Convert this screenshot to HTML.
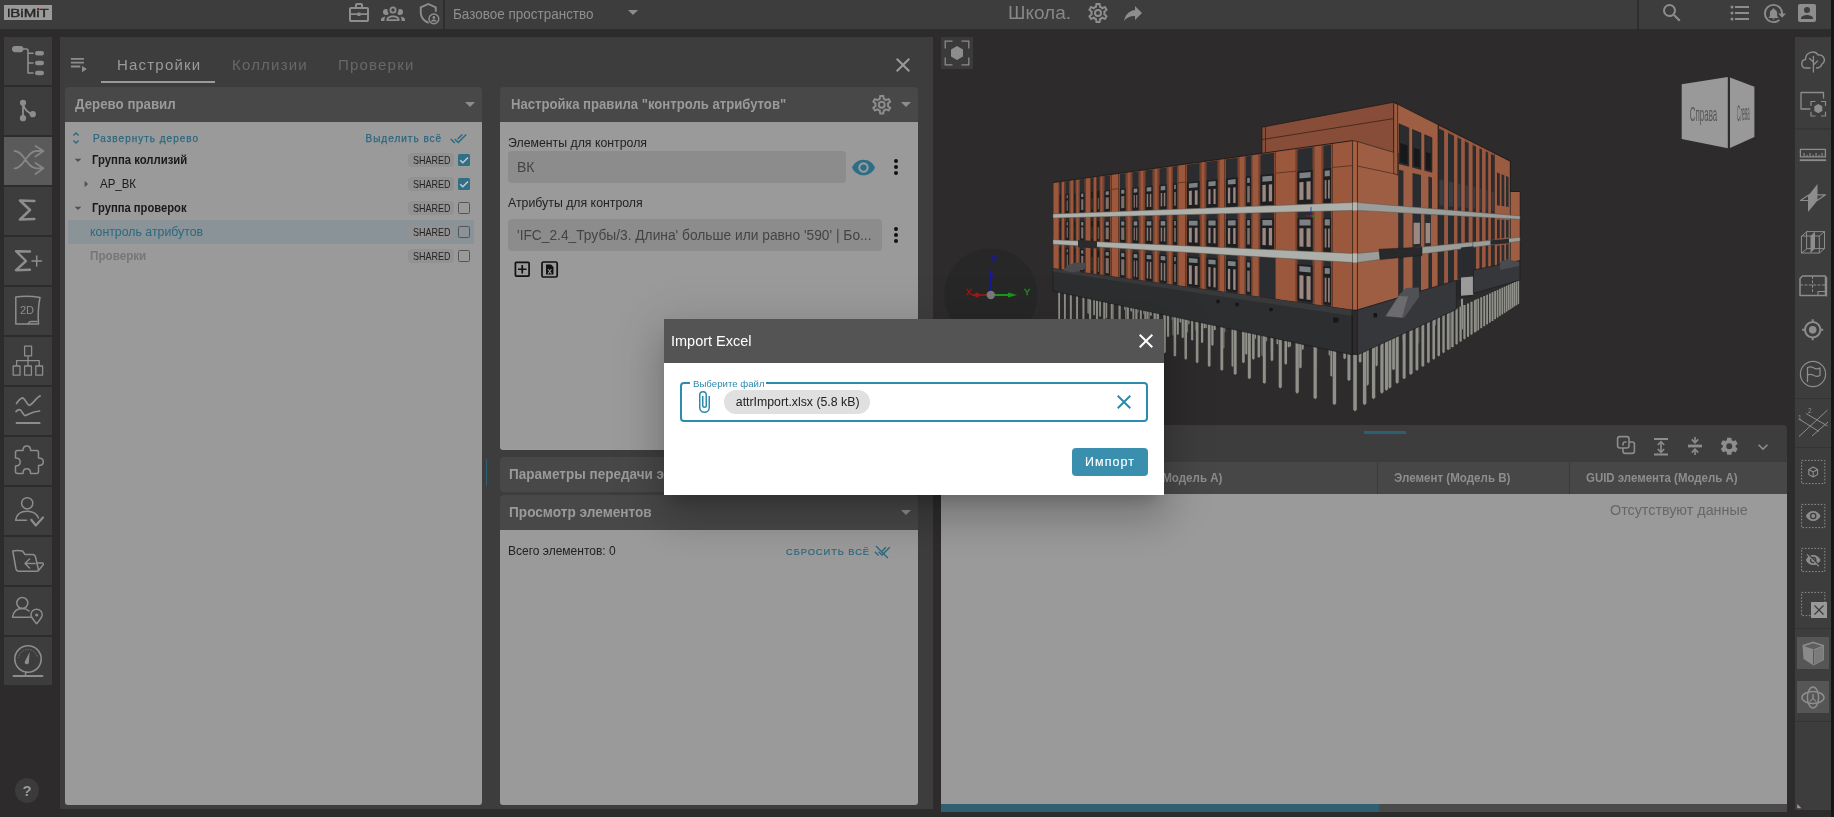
<!DOCTYPE html>
<html lang="ru"><head><meta charset="utf-8"><title>BiMiT</title><style>
*{box-sizing:border-box;margin:0;padding:0}
html,body{width:1834px;height:817px;overflow:hidden;background:#2d2b2c;font-family:"Liberation Sans",sans-serif;}
.a{position:absolute}
.t{position:absolute;white-space:nowrap;line-height:1}
svg{position:absolute;overflow:visible}
.sb{position:absolute;left:4px;width:48px;height:48px;background:#3d3d3d}
.hdr{position:absolute;background:#484848;border-radius:4px 4px 0 0}
.body{position:absolute;background:#9a9a9a;border-radius:0 0 3px 3px}
.pt{position:absolute;white-space:nowrap;line-height:1;font-weight:bold;font-size:14px;color:#9a9a9a}
.chip{position:absolute;left:408.3px;width:45.6px;height:13.6px;border-radius:4px;background:#929292;color:#222;font-size:9.5px;line-height:14px;text-align:center;letter-spacing:0.1px}
.cb{position:absolute;left:458px;width:12px;height:12px}
.cbo{border:1.5px solid #555;border-radius:1.5px}
.tr{position:absolute;white-space:nowrap;line-height:1;font-size:12px;color:#1a1a1a}
.th{position:absolute;white-space:nowrap;line-height:1;font-size:12px;font-weight:bold;color:#8d8d8d}
</style></head><body>
<div id="app" style="position:absolute;left:0;top:0;width:1834px;height:817px;will-change:transform">
<div class="a" style="left:0px;top:0px;width:1831px;height:29px;background:#3d3d3d;"></div>
<div class="a" style="left:1831px;top:0px;width:3px;height:817px;background:#161616;"></div>
<div class="a" style="left:4px;top:5px;width:48px;height:15px;background:#9a9a9a;"></div>
<svg style="left:4px;top:5px" width="48" height="15" viewBox="0 0 48 15"><text x="6.3" y="12.1" font-family="Liberation Sans, sans-serif" font-size="11.6" fill="#262626" stroke="#262626" stroke-width="0.4" textLength="38.5" lengthAdjust="spacingAndGlyphs">BiMiT</text><rect x="33.0" y="3.0" width="2.1" height="2.1" fill="#a81414"/><rect x="4.0" y="3.6" width="1.6" height="8.5" fill="#262626"/></svg>
<svg style="left:347px;top:1px" width="24" height="24" viewBox="0 0 24 24"><path fill="#8d8d8d" d="M20,6C20.58,6 21.05,6.2 21.42,6.59C21.8,7 22,7.45 22,8V19C22,19.55 21.8,20 21.42,20.41C21.05,20.8 20.58,21 20,21H4C3.42,21 2.95,20.8 2.58,20.41C2.2,20 2,19.55 2,19V8C2,7.45 2.2,7 2.58,6.59C2.95,6.2 3.42,6 4,6H8V4C8,3.42 8.2,2.95 8.58,2.58C8.95,2.2 9.42,2 10,2H14C14.58,2 15.05,2.2 15.42,2.58C15.8,2.95 16,3.42 16,4V6H20M4,8V12.2H10.5V11.5H13.5V12.2H20V8H4M4,14V19H20V14H13.5V15H10.5V14H4M14,6V4H10V6H14Z"/></svg>
<svg style="left:381px;top:1px" width="24" height="24" viewBox="0 0 24 24"><path fill="#8d8d8d" d="M12,5.5A3.5,3.5 0 0,1 15.5,9A3.5,3.5 0 0,1 12,12.5A3.5,3.5 0 0,1 8.500,9A3.5,3.5 0 0,1 12,5.5M12,7.3A1.7,1.7 0 0,0 10.3,9A1.7,1.7 0 0,0 12,10.7A1.7,1.7 0 0,0 13.7,9A1.7,1.7 0 0,0 12,7.3M5,8C5.56,8 6.08,8.15 6.53,8.42C6.38,9.85 6.8,11.27 7.66,12.38C7.16,13.34 6.16,14 5,14A3,3 0 0,1 2,11A3,3 0 0,1 5,8M19,8A3,3 0 0,1 22,11A3,3 0 0,1 19,14C17.84,14 16.84,13.34 16.34,12.38C17.2,11.27 17.62,9.85 17.47,8.42C17.92,8.15 18.44,8 19,8M5.500,18.25C5.500,16.18 8.41,14.5 12,14.5C15.59,14.5 18.5,16.18 18.5,18.25V20H5.500V18.25M7.3,18.2H16.7C16.5,17.2 14.6,16.2 12,16.2C9.4,16.2 7.5,17.2 7.3,18.2M0,20V18.500C0,17.11 1.89,15.94 4.45,15.600C3.86,16.28 3.5,17.22 3.5,18.25V20H0M24,20H20.500V18.25C20.500,17.22 20.14,16.28 19.55,15.600C22.11,15.94 24,17.11 24,18.500V20Z"/></svg>
<svg style="left:416.5px;top:2px" width="22.5" height="22.5" viewBox="0 0 24 24"><path fill="#8d8d8d" d="M12,1L3,5V11C3,16.55 6.840,21.74 12,23C12.4,22.9 12.8,22.77 13.18,22.62C12.6,22 12.1,21.3 11.75,20.5C8.100,19.3 5,15.4 5,11.2V6.300L12,3.190L19,6.300V10.2C19.700,10.3 20.38,10.500 21,10.78V5L12,1M18,12A6,6 0 0,0 12,18A6,6 0 0,0 18,24A6,6 0 0,0 24,18A6,6 0 0,0 18,12M18,13.600A4.400,4.400 0 0,1 22.400,18A4.400,4.400 0 0,1 18,22.400A4.400,4.400 0 0,1 13.600,18A4.400,4.400 0 0,1 18,13.600M18,15A1.500,1.500 0 0,0 16.500,16.500A1.500,1.500 0 0,0 18,18A1.500,1.500 0 0,0 19.500,16.500A1.500,1.500 0 0,0 18,15M18,18.700C16.700,18.700 15.200,19.300 15.200,20.200V20.800H20.800V20.200C20.800,19.300 19.300,18.700 18,18.700Z"/></svg>
<div class="a" style="left:443px;top:0px;width:2px;height:29px;background:#2e2e2e;"></div>
<div class="t" style="left:453px;top:7px;font-size:14px;color:#8f8f8f;transform:scaleX(0.963);transform-origin:0 0">Базовое пространство</div>
<svg style="left:621px;top:0.2px" width="24" height="24" viewBox="0 0 24 24"><path fill="#8d8d8d" d="M7,10L12,15L17,10H7Z"/></svg>
<div class="t" style="left:1008px;top:3.0px;font-size:19px;color:#878787">Школа.</div>
<svg style="left:1085.5px;top:1px" width="24" height="24" viewBox="0 0 24 24"><path fill="#8d8d8d" d="M12,8A4,4 0 0,1 16,12A4,4 0 0,1 12,16A4,4 0 0,1 8,12A4,4 0 0,1 12,8M12,10A2,2 0 0,0 10,12A2,2 0 0,0 12,14A2,2 0 0,0 14,12A2,2 0 0,0 12,10M10,22C9.75,22 9.54,21.82 9.5,21.58L9.13,18.93C8.5,18.68 7.96,18.34 7.44,17.94L4.95,18.95C4.73,19.03 4.46,18.95 4.34,18.73L2.34,15.27C2.21,15.05 2.27,14.78 2.46,14.63L4.57,12.97L4.5,12L4.57,11L2.46,9.37C2.27,9.22 2.21,8.95 2.34,8.73L4.34,5.27C4.46,5.05 4.73,4.96 4.95,5.05L7.44,6.05C7.96,5.66 8.5,5.32 9.13,5.07L9.5,2.42C9.54,2.18 9.75,2 10,2H14C14.25,2 14.46,2.18 14.5,2.42L14.87,5.07C15.5,5.32 16.04,5.66 16.56,6.05L19.05,5.05C19.27,4.96 19.54,5.05 19.66,5.27L21.66,8.73C21.79,8.95 21.73,9.22 21.54,9.37L19.43,11L19.5,12L19.43,13L21.54,14.63C21.73,14.78 21.79,15.05 21.66,15.27L19.66,18.73C19.54,18.95 19.27,19.04 19.05,18.95L16.56,17.95C16.04,18.34 15.5,18.68 14.87,18.93L14.5,21.58C14.46,21.82 14.25,22 14,22H10M11.25,4L10.88,6.61C9.68,6.86 8.62,7.5 7.85,8.39L5.44,7.35L4.69,8.65L6.8,10.2C6.4,11.37 6.4,12.64 6.8,13.8L4.68,15.36L5.43,16.66L7.86,15.62C8.63,16.5 9.68,17.14 10.87,17.38L11.24,20H12.76L13.13,17.39C14.32,17.14 15.37,16.5 16.14,15.62L18.57,16.66L19.32,15.36L17.2,13.81C17.6,12.64 17.6,11.37 17.2,10.2L19.31,8.65L18.56,7.35L16.15,8.39C15.38,7.5 14.32,6.86 13.12,6.62L12.75,4H11.25Z"/></svg>
<svg style="left:1121px;top:1px" width="24" height="24" viewBox="0 0 24 24"><path fill="#8d8d8d" d="M21,12L14,5V9C7,10 4,15 3,20C5.5,16.5 9,14.9 14,14.9V19L21,12Z"/></svg>
<div class="a" style="left:1637px;top:0px;width:2px;height:29px;background:#2e2e2e;"></div>
<svg style="left:1659.5px;top:0.5px" width="24" height="24" viewBox="0 0 24 24"><path fill="#8d8d8d" d="M9.5,3A6.5,6.5 0 0,1 16,9.5C16,11.11 15.41,12.59 14.44,13.73L14.71,14H15.5L20.5,19L19,20.5L14,15.5V14.71L13.73,14.44C12.59,15.41 11.11,16 9.5,16A6.5,6.5 0 0,1 3,9.5A6.5,6.5 0 0,1 9.5,3M9.5,5C7,5 5,7 5,9.5C5,12 7,14 9.5,14C12,14 14,12 14,9.5C14,7 12,5 9.5,5Z"/></svg>
<svg style="left:1727.5px;top:0.5px" width="24" height="24" viewBox="0 0 24 24"><path fill="#8d8d8d" d="M7,5H21V7H7V5M7,13V11H21V13H7M4,4.5A1.5,1.5 0 0,1 5.5,6A1.5,1.5 0 0,1 4,7.5A1.5,1.5 0 0,1 2.5,6A1.5,1.5 0 0,1 4,4.5M4,10.5A1.5,1.5 0 0,1 5.5,12A1.5,1.5 0 0,1 4,13.5A1.5,1.5 0 0,1 2.5,12A1.5,1.5 0 0,1 4,10.5M7,19V17H21V19H7M4,16.5A1.5,1.5 0 0,1 5.5,18A1.5,1.5 0 0,1 4,19.5A1.5,1.5 0 0,1 2.5,18A1.5,1.5 0 0,1 4,16.5Z"/></svg>
<svg style="left:1761.5px;top:1.5px" width="23" height="23" viewBox="0 0 24 24"><path fill="#8d8d8d" d="M12,2A10,10 0 0,0 2,12A10,10 0 0,0 12,22C14.6,22 17,21 18.800,19.300L17.400,17.900C16,19.200 14.100,20 12,20A8,8 0 0,1 4,12A8,8 0 0,1 12,4A8,8 0 0,1 20,12H17L21,16.500L25,12H22A10,10 0 0,0 12,2M12,6.500C11.400,6.500 11,6.900 11,7.500V7.800C9.300,8.300 8.200,9.800 8.200,11.600V14.800L7,16V16.600H17V16L15.800,14.800V11.600C15.800,9.800 14.700,8.300 13,7.800V7.500C13,6.900 12.600,6.500 12,6.500M10.800,17.300A1.200,1.200 0 0,0 12,18.500A1.200,1.200 0 0,0 13.200,17.300H10.800Z"/></svg>
<svg style="left:1795px;top:1px" width="24" height="24" viewBox="0 0 24 24"><path fill="#8d8d8d" d="M6,17C6,15 10,13.9 12,13.9C14,13.9 18,15 18,17V18H6M15,9A3,3 0 0,1 12,12A3,3 0 0,1 9,9A3,3 0 0,1 12,6A3,3 0 0,1 15,9M3,5V19A2,2 0 0,0 5,21H19A2,2 0 0,0 21,19V5A2,2 0 0,0 19,3H5C3.89,3 3,3.9 3,5Z"/></svg>
<div class="sb" style="top:37px;background:#3d3d3d"></div>
<svg style="left:4px;top:37px" width="48" height="48" viewBox="0 0 48 48"><rect x="8" y="9" width="11.5" height="6.2" rx="3.1" fill="#8d8d8d"/><path d="M18.0,12.0 L22.5,12.0 Q24.0,12.0 24.0,13.5 L24.0,36.0 L29.0,36.0 M24.0,16.2 L29.0,16.2 M24.0,26.0 L29.0,26.0" fill="none" stroke="#8d8d8d" stroke-width="1.6" stroke-linecap="round" stroke-linejoin="round" /><rect x="31" y="13.900000000000006" width="9" height="4.6" rx="2.3" fill="#8d8d8d"/><rect x="31" y="23.700000000000003" width="9" height="4.6" rx="2.3" fill="#8d8d8d"/><rect x="31" y="33.7" width="9" height="4.6" rx="2.3" fill="#8d8d8d"/></svg>
<div class="sb" style="top:87px;background:#3d3d3d"></div>
<svg style="left:4px;top:87px" width="48" height="48" viewBox="0 0 48 48"><circle cx="19" cy="15.799999999999997" r="3.1" fill="#8d8d8d"/><circle cx="19" cy="31.200000000000003" r="3.1" fill="#8d8d8d"/><circle cx="28.799999999999997" cy="27.200000000000003" r="3.1" fill="#8d8d8d"/><path d="M19.0,15.8 L19.0,31.2 M19.0,17.0 Q21.0,25.0 28.8,27.2" fill="none" stroke="#8d8d8d" stroke-width="1.8" stroke-linecap="round" stroke-linejoin="round" /></svg>
<div class="sb" style="top:137px;background:#5a5a5a"></div>
<svg style="left:4px;top:137px" width="48" height="48" viewBox="0 0 48 48"><path d="M10.5,14.0 C20.0,14.0 23.0,31.3 32.0,31.3 L39.0,31.3 M10.5,31.3 C20.0,31.3 23.0,14.0 32.0,14.0 L39.0,14.0 M31.5,9.0 L39.5,14.0 L31.5,19.5 M31.5,26.0 L39.5,31.3 L31.5,37.0" fill="none" stroke="#858585" stroke-width="1.8" stroke-linecap="round" stroke-linejoin="round"/></svg>
<div class="sb" style="top:187px;background:#3d3d3d"></div>
<svg style="left:4px;top:187px" width="48" height="48" viewBox="0 0 48 48"><path d="M30.3,14.0 L16.0,13.5 L26.0,23.0 L16.0,32.5 L30.3,32.0" fill="none" stroke="#8d8d8d" stroke-width="2.6" stroke-linecap="round" stroke-linejoin="round" /></svg>
<div class="sb" style="top:237px;background:#3d3d3d"></div>
<svg style="left:4px;top:237px" width="48" height="48" viewBox="0 0 48 48"><path d="M26.0,14.5 L12.0,14.2 L22.0,24.0 L12.0,33.2 L26.0,32.8" fill="none" stroke="#8d8d8d" stroke-width="2.4" stroke-linecap="round" stroke-linejoin="round" /><path d="M28.0,24.0 L37.5,24.0 M32.7,19.0 L32.7,29.0" fill="none" stroke="#8d8d8d" stroke-width="1.5" stroke-linecap="round" stroke-linejoin="round" /></svg>
<div class="sb" style="top:287px;background:#3d3d3d"></div>
<svg style="left:4px;top:287px" width="48" height="48" viewBox="0 0 48 48"><path d="M11.8,10.0 Q24.0,8.5 36.0,10.5 Q33.5,23.0 34.5,37.0 L11.8,37.0 Z" fill="none" stroke="#8d8d8d" stroke-width="1.5" stroke-linecap="round" stroke-linejoin="round" /><path d="M24.0,37.0 Q25.0,34.5 27.0,34.5 L33.0,34.5" fill="none" stroke="#8d8d8d" stroke-width="1.5" stroke-linecap="round" stroke-linejoin="round" /><text x="23" y="27.30000000000001" text-anchor="middle" font-family="Liberation Sans, sans-serif" font-size="11.8" fill="#8d8d8d" textLength="14.2" lengthAdjust="spacingAndGlyphs">2D</text></svg>
<div class="sb" style="top:337px;background:#3d3d3d"></div>
<svg style="left:4px;top:337px" width="48" height="48" viewBox="0 0 48 48"><path d="M20.6,9.2 h7 v9.6 h-7 Z M9.2,29.0 h6.8 v9.2 h-6.8 Z M20.6,29.0 h6.8 v9.2 h-6.8 Z M31.8,29.0 h6.8 v9.2 h-6.8 Z M24.0,19.0 L24.0,29.0 M12.6,29.0 L12.6,23.7 L35.2,23.7 L35.2,29.0" fill="none" stroke="#8d8d8d" stroke-width="1.3" stroke-linecap="round" stroke-linejoin="round" /></svg>
<div class="sb" style="top:387px;background:#3d3d3d"></div>
<svg style="left:4px;top:387px" width="48" height="48" viewBox="0 0 48 48"><path d="M12.5,16.5 Q16.0,11.0 18.6,10.8 C21.0,11.0 23.0,18.0 25.3,18.3 C28.0,18.0 32.0,11.0 36.2,8.8" fill="none" stroke="#8d8d8d" stroke-width="1.7" stroke-linecap="round" stroke-linejoin="round" /><path d="M12.0,24.6 Q14.5,21.5 16.5,23.0 C18.5,25.0 19.5,28.6 21.5,28.6 C24.0,28.0 28.0,24.3 35.6,24.0" fill="none" stroke="#8d8d8d" stroke-width="1.7" stroke-linecap="round" stroke-linejoin="round" /><path d="M12.5,36.0 L35.7,36.0" fill="none" stroke="#8d8d8d" stroke-width="1.8" stroke-linecap="round" stroke-linejoin="round" /></svg>
<div class="sb" style="top:437px;background:#3d3d3d"></div>
<svg style="left:4px;top:437px" width="48" height="48" viewBox="0 0 48 48"><path d="M13.5,13.5 L19.0,13.5 C19.0,10.0 20.5,8.9 22.8,8.9 C25.2,8.9 26.6,10.0 26.6,13.5 L32.5,13.5 Q34.5,13.5 34.5,15.5 L34.5,21.0 C38.0,21.0 39.3,22.5 39.3,24.8 C39.3,27.2 38.0,28.6 34.5,28.6 L34.5,34.5 Q34.5,36.5 32.5,36.5 L26.6,36.5 C26.6,33.0 25.2,31.8 22.8,31.8 C20.5,31.8 19.0,33.0 19.0,36.5 L13.5,36.5 Q11.5,36.5 11.5,34.5 L11.5,29.0 C15.0,29.0 16.2,27.4 16.2,25.0 C16.2,22.6 15.0,21.0 11.5,21.0 L11.5,15.5 Q11.5,13.5 13.5,13.5 Z" fill="none" stroke="#8d8d8d" stroke-width="1.5" stroke-linecap="round" stroke-linejoin="round" /></svg>
<div class="sb" style="top:487px;background:#3d3d3d"></div>
<svg style="left:4px;top:487px" width="48" height="48" viewBox="0 0 48 48"><circle cx="23.2" cy="16.30000000000001" r="5.6" fill="none" stroke="#8d8d8d" stroke-width="1.5"/><path d="M22.5,33.3 L11.6,33.3 C12.5,27.0 17.0,24.3 23.2,24.3 C28.5,24.3 32.5,26.5 34.5,31.0" fill="none" stroke="#8d8d8d" stroke-width="1.5" stroke-linecap="round" stroke-linejoin="round" /><path d="M27.3,32.8 L31.8,38.5 L39.0,30.5" fill="none" stroke="#8d8d8d" stroke-width="2.2" stroke-linecap="round" stroke-linejoin="round" /></svg>
<div class="sb" style="top:537px;background:#3d3d3d"></div>
<svg style="left:4px;top:537px" width="48" height="48" viewBox="0 0 48 48"><path d="M8.8,14.0 Q13.0,13.0 18.5,14.0 L21.0,17.5 L29.0,17.5 Q31.0,18.0 31.5,20.0 L34.5,33.0 Q34.5,34.3 33.0,34.3 L14.5,34.3 Q12.5,34.0 12.0,32.0 Z" fill="none" stroke="#8d8d8d" stroke-width="1.5" stroke-linecap="round" stroke-linejoin="round" /><path d="M34.5,33.5 L39.2,27.8 Q39.8,26.0 38.0,26.0 L32.8,26.0" fill="none" stroke="#8d8d8d" stroke-width="1.5" stroke-linecap="round" stroke-linejoin="round" /><path d="M31.0,26.5 L21.0,26.5 M25.5,22.0 L21.0,26.5 L25.5,31.0" fill="none" stroke="#8d8d8d" stroke-width="1.5" stroke-linecap="round" stroke-linejoin="round" /></svg>
<div class="sb" style="top:587px;background:#3d3d3d"></div>
<svg style="left:4px;top:587px" width="48" height="48" viewBox="0 0 48 48"><circle cx="18.3" cy="16" r="5.5" fill="none" stroke="#8d8d8d" stroke-width="1.5"/><path d="M26.5,30.2 L8.5,30.2 C9.5,24.0 13.5,21.5 18.5,21.5 C21.5,21.5 23.5,22.5 25.0,24.0" fill="none" stroke="#8d8d8d" stroke-width="1.5" stroke-linecap="round" stroke-linejoin="round" /><path d="M32.6,36.7 C29.0,32.5 27.0,30.5 27.0,27.8 A5.6,5.6 0 0,1 38.2,27.8 C38.2,30.5 36.2,32.5 32.6,36.7 Z" fill="none" stroke="#8d8d8d" stroke-width="1.5" stroke-linecap="round" stroke-linejoin="round" /><circle cx="32.7" cy="28" r="1.6" fill="#8d8d8d"/></svg>
<div class="sb" style="top:637px;background:#3d3d3d"></div>
<svg style="left:4px;top:637px" width="48" height="48" viewBox="0 0 48 48"><circle cx="24" cy="22" r="13.2" fill="none" stroke="#8d8d8d" stroke-width="1.6"/><circle cx="24" cy="22" r="9.5" fill="none" stroke="#8d8d8d" stroke-width="0.8" stroke-dasharray="1.2 1.6" pathLength="60" stroke-dashoffset="0" clip-path="inset(0 0 55% 0)"/><path d="M25.6,15.0 L24.8,26.0 A2.2,2.2 0 0,1 20.6,25.0 Z" fill="#8d8d8d"/><path d="M9.5,39.0 L38.5,39.0" fill="none" stroke="#8d8d8d" stroke-width="1.8" stroke-linecap="round" stroke-linejoin="round" stroke-linecap="butt"/><path d="M22.0,35.0 L21.3,38.5" fill="none" stroke="#8d8d8d" stroke-width="1.5" stroke-linecap="round" stroke-linejoin="round" /></svg>
<div class="a" style="left:14.6px;top:778.2px;width:24.6px;height:24.6px;border-radius:12.3px;background:#3b3b3b"></div>
<div class="t" style="left:22.6px;top:783.3px;font-size:15px;font-weight:bold;color:#9a9a9a">?</div>
<div class="a" style="left:60px;top:37px;width:873px;height:772px;background:#3d3d3d;"></div>
<svg style="left:70px;top:56px" width="20" height="18" viewBox="70 56 20 18"><path fill="#8d8d8d" d="M70.9 58h13v1.7h-13zM70.9 61.8h13v1.7h-13zM70.9 65.6h9.4v1.8h-9.4zM82 65.9l4.9 3.1l-4.9 3.2z"/></svg>
<div class="t" style="left:117px;top:57px;font-size:15px;letter-spacing:1.2px;color:#9a9a9a">Настройки</div>
<div class="t" style="left:232px;top:57px;font-size:15px;letter-spacing:1.2px;color:#686868">Коллизии</div>
<div class="t" style="left:338px;top:57px;font-size:15px;letter-spacing:1.2px;color:#686868">Проверки</div>
<div class="a" style="left:101px;top:81px;width:114px;height:2px;background:#9a9a9a;"></div>
<svg style="left:891px;top:53px" width="24" height="24" viewBox="0 0 24 24"><path fill="#9a9a9a" d="M19,6.41L17.59,5L12,10.59L6.41,5L5,6.41L10.59,12L5,17.59L6.41,19L12,13.41L17.59,19L19,17.59L13.41,12L19,6.41Z"/></svg>
<div class="hdr" style="left:65px;top:87px;width:417px;height:35px"></div>
<div class="body" style="left:65px;top:122px;width:417px;height:683px"></div>
<div class="pt" style="left:75px;top:97px;;transform:scaleX(0.95);transform-origin:0 0">Дерево правил</div>
<svg style="left:458px;top:91.5px" width="24" height="24" viewBox="0 0 24 24"><path fill="#8d8d8d" d="M7,10L12,15L17,10H7Z"/></svg>
<svg style="left:68px;top:130px" width="16" height="16" viewBox="0 0 24 24"><path fill="#2c687f" d="M12,18.17L8.83,15L7.41,16.41L12,21L16.59,16.41L15.17,15M12,5.83L15.17,9L16.58,7.59L12,3L7.41,7.59L8.83,9L12,5.83Z"/></svg>
<div class="t" style="left:93px;top:133.5px;font-size:10px;letter-spacing:1px;color:#2c687f;-webkit-text-stroke:0.25px #2c687f">Развернуть дерево</div>
<div class="t" style="left:365.5px;top:133.5px;font-size:10px;letter-spacing:1px;color:#2c687f;-webkit-text-stroke:0.25px #2c687f">Выделить всё</div>
<svg style="left:450px;top:129.5px" width="17" height="17" viewBox="0 0 24 24"><path fill="#2c687f" d="M0.41,13.41L6,19L7.41,17.58L1.83,12M22.24,5.58L11.66,16.17L7.5,12L6.07,13.41L11.66,19L23.66,7M18,7L16.59,5.58L10.24,11.93L11.66,13.34L18,7Z"/></svg>
<div class="a" style="left:68px;top:220px;width:406px;height:24px;background:#8a9397;"></div>
<div class="tr" style="left:92px;top:154px;font-weight:bold;transform:scaleX(0.944);transform-origin:0 0">Группа коллизий</div>
<div class="chip" style="top:153.4px"></div>
<div class="t" style="left:412.5px;top:155.8px;font-size:10.3px;color:#222;transform:scaleX(0.876);transform-origin:0 0">SHARED</div>
<div class="cb" style="top:154px;background:#2f6f88;border-radius:1.5px"></div>
<svg style="left:458px;top:154px" width="12" height="12" viewBox="0 0 12 12"><path d="M2.2 6.2 L4.8 8.8 L10 3.4" fill="none" stroke="#c8c8c8" stroke-width="1.5"/></svg>
<div class="tr" style="left:100px;top:178px;;transform:scaleX(0.954);transform-origin:0 0">АР_ВК</div>
<div class="chip" style="top:177.4px"></div>
<div class="t" style="left:412.5px;top:179.8px;font-size:10.3px;color:#222;transform:scaleX(0.876);transform-origin:0 0">SHARED</div>
<div class="cb" style="top:178px;background:#2f6f88;border-radius:1.5px"></div>
<svg style="left:458px;top:178px" width="12" height="12" viewBox="0 0 12 12"><path d="M2.2 6.2 L4.8 8.8 L10 3.4" fill="none" stroke="#c8c8c8" stroke-width="1.5"/></svg>
<div class="tr" style="left:92px;top:202px;font-weight:bold;transform:scaleX(0.935);transform-origin:0 0">Группа проверок</div>
<div class="chip" style="top:201.4px"></div>
<div class="t" style="left:412.5px;top:203.8px;font-size:10.3px;color:#222;transform:scaleX(0.876);transform-origin:0 0">SHARED</div>
<div class="cb cbo" style="top:202px"></div>
<div class="tr" style="left:90px;top:226px;color:#2c687f;transform:scaleX(1.027);transform-origin:0 0">контроль атрибутов</div>
<div class="chip" style="top:225.4px"></div>
<div class="t" style="left:412.5px;top:227.8px;font-size:10.3px;color:#222;transform:scaleX(0.876);transform-origin:0 0">SHARED</div>
<div class="cb cbo" style="top:226px"></div>
<div class="tr" style="left:90px;top:250px;font-weight:bold;color:#767676;transform:scaleX(0.972);transform-origin:0 0">Проверки</div>
<div class="chip" style="top:249.4px"></div>
<div class="t" style="left:412.5px;top:251.8px;font-size:10.3px;color:#222;transform:scaleX(0.876);transform-origin:0 0">SHARED</div>
<div class="cb cbo" style="top:250px"></div>
<svg style="left:69.9px;top:151.9px" width="16" height="16" viewBox="0 0 24 24"><path fill="#505050" d="M7,10L12,15L17,10H7Z"/></svg>
<svg style="left:77.9px;top:175.8px" width="16" height="16" viewBox="0 0 24 24"><path fill="#505050" d="M10,17L15,12L10,7V17Z"/></svg>
<svg style="left:69.9px;top:199.9px" width="16" height="16" viewBox="0 0 24 24"><path fill="#505050" d="M7,10L12,15L17,10H7Z"/></svg>
<div class="hdr" style="left:500px;top:87px;width:418px;height:35px"></div>
<div class="body" style="left:500px;top:122px;width:418px;height:328px"></div>
<div class="pt" style="left:510.5px;top:97px;;transform:scaleX(0.937);transform-origin:0 0">Настройка правила "контроль атрибутов"</div>
<svg style="left:870px;top:93px" width="23.5" height="23.5" viewBox="0 0 24 24"><path fill="#8d8d8d" d="M12,8A4,4 0 0,1 16,12A4,4 0 0,1 12,16A4,4 0 0,1 8,12A4,4 0 0,1 12,8M12,10A2,2 0 0,0 10,12A2,2 0 0,0 12,14A2,2 0 0,0 14,12A2,2 0 0,0 12,10M10,22C9.75,22 9.54,21.82 9.5,21.58L9.13,18.93C8.5,18.68 7.96,18.34 7.44,17.94L4.95,18.95C4.73,19.03 4.46,18.95 4.34,18.73L2.34,15.27C2.21,15.05 2.27,14.78 2.46,14.63L4.57,12.97L4.5,12L4.57,11L2.46,9.37C2.27,9.22 2.21,8.95 2.34,8.73L4.34,5.27C4.46,5.05 4.73,4.96 4.95,5.05L7.44,6.05C7.96,5.66 8.5,5.32 9.13,5.07L9.5,2.42C9.54,2.18 9.75,2 10,2H14C14.25,2 14.46,2.18 14.5,2.42L14.87,5.07C15.5,5.32 16.04,5.66 16.56,6.05L19.05,5.05C19.27,4.96 19.54,5.05 19.66,5.27L21.66,8.73C21.79,8.95 21.73,9.22 21.54,9.37L19.43,11L19.5,12L19.43,13L21.54,14.63C21.73,14.78 21.79,15.05 21.66,15.27L19.66,18.73C19.54,18.95 19.27,19.04 19.05,18.95L16.56,17.95C16.04,18.34 15.5,18.68 14.87,18.93L14.5,21.58C14.46,21.82 14.25,22 14,22H10M11.25,4L10.88,6.61C9.68,6.86 8.62,7.5 7.85,8.39L5.44,7.35L4.69,8.65L6.8,10.2C6.4,11.37 6.4,12.64 6.8,13.8L4.68,15.36L5.43,16.66L7.86,15.62C8.63,16.5 9.68,17.14 10.87,17.38L11.24,20H12.76L13.13,17.39C14.32,17.14 15.37,16.5 16.14,15.62L18.57,16.66L19.32,15.36L17.2,13.81C17.6,12.64 17.6,11.37 17.2,10.2L19.31,8.65L18.56,7.35L16.15,8.39C15.38,7.5 14.32,6.86 13.12,6.62L12.75,4H11.25Z"/></svg>
<svg style="left:894px;top:91.5px" width="24" height="24" viewBox="0 0 24 24"><path fill="#8d8d8d" d="M7,10L12,15L17,10H7Z"/></svg>
<div class="t" style="left:508px;top:136.8px;font-size:12.5px;color:#222;transform:scaleX(0.985);transform-origin:0 0">Элементы для контроля</div>
<div class="a" style="left:508px;top:151px;width:338px;height:32px;background:#8c8c8c;border-radius:4px"></div>
<div class="t" style="left:517px;top:160px;font-size:14px;color:#444">ВК</div>
<svg style="left:851px;top:155px" width="25" height="25" viewBox="0 0 24 24"><path fill="#2d6d85" d="M12,9A3,3 0 0,0 9,12A3,3 0 0,0 12,15A3,3 0 0,0 15,12A3,3 0 0,0 12,9M12,17A5,5 0 0,1 7,12A5,5 0 0,1 12,7A5,5 0 0,1 17,12A5,5 0 0,1 12,17M12,4.5C7,4.5 2.73,7.61 1,12C2.73,16.39 7,19.5 12,19.5C17,19.5 21.27,16.39 23,12C21.27,7.61 17,4.5 12,4.5Z"/></svg>
<svg style="left:883.5px;top:155px" width="24" height="24" viewBox="0 0 24 24"><path fill="#111" d="M12,16A2,2 0 0,1 14,18A2,2 0 0,1 12,20A2,2 0 0,1 10,18A2,2 0 0,1 12,16M12,10A2,2 0 0,1 14,12A2,2 0 0,1 12,14A2,2 0 0,1 10,12A2,2 0 0,1 12,10M12,4A2,2 0 0,1 14,6A2,2 0 0,1 12,8A2,2 0 0,1 10,6A2,2 0 0,1 12,4Z"/></svg>
<div class="t" style="left:508px;top:197px;font-size:12.5px;color:#222;transform:scaleX(0.985);transform-origin:0 0">Атрибуты для контроля</div>
<div class="a" style="left:508px;top:219px;width:374px;height:32px;background:#8c8c8c;border-radius:4px"></div>
<div class="t" style="left:517px;top:228px;font-size:14px;color:#444;transform:scaleX(0.983);transform-origin:0 0">'IFC_2.4_Трубы/3. Длина' больше или равно '590' | Бо...</div>
<svg style="left:883.5px;top:223px" width="24" height="24" viewBox="0 0 24 24"><path fill="#111" d="M12,16A2,2 0 0,1 14,18A2,2 0 0,1 12,20A2,2 0 0,1 10,18A2,2 0 0,1 12,16M12,10A2,2 0 0,1 14,12A2,2 0 0,1 12,14A2,2 0 0,1 10,12A2,2 0 0,1 12,10M12,4A2,2 0 0,1 14,6A2,2 0 0,1 12,8A2,2 0 0,1 10,6A2,2 0 0,1 12,4Z"/></svg>
<svg style="left:511.5px;top:259px" width="20.5" height="20.5" viewBox="0 0 24 24"><path fill="#111" d="M19,19V5H5V19H19M19,3A2,2 0 0,1 21,5V19A2,2 0 0,1 19,21H5A2,2 0 0,1 3,19V5C3,3.89 3.9,3 5,3H19M11,7H13V11H17V13H13V17H11V13H7V11H11V7Z"/></svg>
<svg style="left:541px;top:261px" width="17.2" height="17" viewBox="0 0 17.2 17"><rect x="1" y="1" width="15.2" height="15" rx="1.6" fill="none" stroke="#111" stroke-width="1.7"/><path d="M5 3.5 H10 L12.5 6 V13.5 H5 Z" fill="#111"/><path d="M7 8 L10.4 12.6 M10.4 8 L7 12.6" stroke="#9a9a9a" stroke-width="1.1"/></svg>
<div class="hdr" style="left:500px;top:457px;width:418px;height:35px;border-radius:4px"></div>
<div class="pt" style="left:509.3px;top:467px;;transform:scaleX(0.965);transform-origin:0 0">Параметры передачи элементов</div>
<div class="a" style="left:485.5px;top:459px;width:1.5px;height:27px;background:#2c5f73;"></div>
<div class="hdr" style="left:500px;top:495px;width:418px;height:35px"></div>
<div class="body" style="left:500px;top:530px;width:418px;height:275px"></div>
<div class="pt" style="left:509.3px;top:505px;;transform:scaleX(0.974);transform-origin:0 0">Просмотр элементов</div>
<svg style="left:894px;top:499.5px" width="24" height="24" viewBox="0 0 24 24"><path fill="#8d8d8d" d="M7,10L12,15L17,10H7Z"/></svg>
<div class="t" style="left:508px;top:545px;font-size:12px;color:#222">Всего элементов: 0</div>
<div class="t" style="left:786px;top:548.3px;font-size:9.3px;letter-spacing:0.95px;color:#2c687f;-webkit-text-stroke:0.2px #2c687f">СБРОСИТЬ ВСЁ</div>
<svg style="left:873.5px;top:543.3px" width="16.5" height="16.5" viewBox="0 0 24 24"><path fill="#2c687f" d="M0.41,13.41L6,19L7.41,17.58L1.83,12M22.24,5.58L11.66,16.17L7.5,12L6.07,13.41L11.66,19L23.66,7M18,7L16.59,5.58L10.24,11.93L11.66,13.34L18,7M3.5,3.8L2.2,5.1L19.5,22.4L20.8,21.1Z"/></svg>
<svg style="left:940px;top:29px;overflow:hidden" width="855" height="396" viewBox="940 29 855 396"><rect x="940" y="29" width="855" height="396" fill="#2d2b2c"/><polygon points="1517.4,280.4 1519.3,280.4 1519.3,303.5 1518.3,304.5 1517.4,303.5" fill="#3c3c3a"/><polygon points="1517.6,280.4 1519.1,280.4 1519.1,303.5 1518.3,304.2 1517.6,303.5" fill="#90908a"/><polygon points="1515.6,281.2 1517.5,281.2 1517.5,304.6 1516.5,305.7 1515.6,304.6" fill="#3c3c3a"/><polygon points="1515.8,281.2 1517.3,281.2 1517.3,304.6 1516.5,305.4 1515.8,304.6" fill="#90908a"/><polygon points="1513.7,282.0 1515.7,282.0 1515.7,305.8 1514.7,306.9 1513.7,305.8" fill="#3c3c3a"/><polygon points="1514.0,282.0 1515.5,282.0 1515.5,305.8 1514.7,306.6 1514.0,305.8" fill="#90908a"/><polygon points="1511.8,282.9 1513.8,282.9 1513.8,307.1 1512.8,308.1 1511.8,307.1" fill="#3c3c3a"/><polygon points="1512.0,282.9 1513.6,282.9 1513.6,307.1 1512.8,307.9 1512.0,307.1" fill="#90908a"/><polygon points="1118.1,283.7 1120.1,283.7 1120.1,308.2 1119.1,309.2 1118.1,308.2" fill="#3c3c3a"/><polygon points="1118.3,283.7 1119.9,283.7 1119.9,308.2 1119.1,309.0 1118.3,308.2" fill="#90908a"/><polygon points="1509.8,283.8 1511.8,283.8 1511.8,308.4 1510.8,309.4 1509.8,308.4" fill="#3c3c3a"/><polygon points="1510.1,283.8 1511.6,283.8 1511.6,308.4 1510.8,309.2 1510.1,308.4" fill="#90908a"/><polygon points="1124.0,284.6 1126.1,284.6 1126.1,309.5 1125.0,310.6 1124.0,309.5" fill="#3c3c3a"/><polygon points="1124.3,284.6 1125.9,284.6 1125.9,309.5 1125.0,310.3 1124.3,309.5" fill="#90908a"/><polygon points="1507.7,284.7 1509.8,284.7 1509.8,309.7 1508.8,310.8 1507.7,309.7" fill="#3c3c3a"/><polygon points="1508.0,284.7 1509.6,284.7 1509.6,309.7 1508.8,310.5 1508.0,309.7" fill="#90908a"/><polygon points="1130.1,285.6 1132.2,285.6 1132.2,310.8 1131.2,311.9 1130.1,310.8" fill="#3c3c3a"/><polygon points="1130.4,285.6 1132.0,285.6 1132.0,310.8 1131.2,311.7 1130.4,310.8" fill="#90908a"/><polygon points="1505.6,285.7 1507.7,285.7 1507.7,311.0 1506.7,312.2 1505.6,311.0" fill="#3c3c3a"/><polygon points="1505.9,285.7 1507.5,285.7 1507.5,311.0 1506.7,311.9 1505.9,311.0" fill="#90908a"/><polygon points="1136.5,286.5 1138.6,286.5 1138.6,312.2 1137.5,313.4 1136.5,312.2" fill="#3c3c3a"/><polygon points="1136.7,286.5 1138.4,286.5 1138.4,312.2 1137.5,313.1 1136.7,312.2" fill="#90908a"/><polygon points="1503.4,286.7 1505.6,286.7 1505.6,312.4 1504.5,313.6 1503.4,312.4" fill="#3c3c3a"/><polygon points="1503.7,286.7 1505.4,286.7 1505.4,312.4 1504.5,313.3 1503.7,312.4" fill="#90908a"/><polygon points="1087.2,287.1 1089.3,287.1 1089.3,313.1 1088.3,314.2 1087.2,313.1" fill="#3c3c3a"/><polygon points="1087.5,287.1 1089.1,287.1 1089.1,313.1 1088.3,313.9 1087.5,313.1" fill="#90908a"/><polygon points="1143.0,287.6 1145.2,287.6 1145.2,313.7 1144.1,314.8 1143.0,313.7" fill="#3c3c3a"/><polygon points="1143.3,287.6 1144.9,287.6 1144.9,313.7 1144.1,314.6 1143.3,313.7" fill="#90908a"/><polygon points="1501.2,287.7 1503.3,287.7 1503.3,313.9 1502.3,315.1 1501.2,313.9" fill="#3c3c3a"/><polygon points="1501.5,287.7 1503.1,287.7 1503.1,313.9 1502.3,314.8 1501.5,313.9" fill="#90908a"/><polygon points="1093.0,288.2 1095.2,288.2 1095.2,314.5 1094.1,315.7 1093.0,314.5" fill="#3c3c3a"/><polygon points="1093.3,288.2 1094.9,288.2 1094.9,314.5 1094.1,315.4 1093.3,314.5" fill="#90908a"/><polygon points="1149.8,288.6 1152.0,288.6 1152.0,315.2 1150.9,316.4 1149.8,315.2" fill="#3c3c3a"/><polygon points="1150.1,288.6 1151.7,288.6 1151.7,315.2 1150.9,316.1 1150.1,315.2" fill="#90908a"/><polygon points="1498.9,288.8 1501.0,288.8 1501.0,315.4 1500.0,316.6 1498.9,315.4" fill="#3c3c3a"/><polygon points="1499.1,288.8 1500.8,288.8 1500.8,315.4 1500.0,316.3 1499.1,315.4" fill="#90908a"/><polygon points="1098.9,289.2 1101.2,289.2 1101.2,316.1 1100.1,317.2 1098.9,316.1" fill="#3c3c3a"/><polygon points="1099.2,289.2 1100.9,289.2 1100.9,316.1 1100.1,317.0 1099.2,316.1" fill="#90908a"/><polygon points="1156.8,289.7 1159.0,289.7 1159.0,316.7 1157.9,317.9 1156.8,316.7" fill="#3c3c3a"/><polygon points="1157.1,289.7 1158.8,289.7 1158.8,316.7 1157.9,317.6 1157.1,316.7" fill="#90908a"/><polygon points="1496.4,289.9 1498.7,289.9 1498.7,317.0 1497.6,318.2 1496.4,317.0" fill="#3c3c3a"/><polygon points="1496.7,289.9 1498.4,289.9 1498.4,317.0 1497.6,317.9 1496.7,317.0" fill="#90908a"/><polygon points="1105.1,290.4 1107.4,290.4 1107.4,317.7 1106.2,318.9 1105.1,317.7" fill="#3c3c3a"/><polygon points="1105.4,290.4 1107.2,290.4 1107.2,317.7 1106.2,318.6 1105.4,317.7" fill="#90908a"/><polygon points="1164.0,290.8 1166.3,290.8 1166.3,318.3 1165.1,319.6 1164.0,318.3" fill="#3c3c3a"/><polygon points="1164.3,290.8 1166.1,290.8 1166.1,318.3 1165.1,319.3 1164.3,318.3" fill="#90908a"/><polygon points="1493.9,291.0 1496.2,291.0 1496.2,318.6 1495.1,319.8 1493.9,318.6" fill="#3c3c3a"/><polygon points="1494.2,291.0 1496.0,291.0 1496.0,318.6 1495.1,319.5 1494.2,318.6" fill="#90908a"/><polygon points="1111.5,291.5 1113.8,291.5 1113.8,319.3 1112.7,320.5 1111.5,319.3" fill="#3c3c3a"/><polygon points="1111.8,291.5 1113.6,291.5 1113.6,319.3 1112.7,320.2 1111.8,319.3" fill="#90908a"/><polygon points="1171.5,292.0 1173.8,292.0 1173.8,320.0 1172.7,321.2 1171.5,320.0" fill="#3c3c3a"/><polygon points="1171.8,292.0 1173.6,292.0 1173.6,320.0 1172.7,320.9 1171.8,320.0" fill="#90908a"/><polygon points="1058.0,292.2 1060.3,292.2 1060.3,320.3 1059.1,321.5 1058.0,320.3" fill="#3c3c3a"/><polygon points="1058.3,292.2 1060.0,292.2 1060.0,320.3 1059.1,321.2 1058.3,320.3" fill="#90908a"/><polygon points="1491.3,292.2 1493.7,292.2 1493.7,320.3 1492.5,321.5 1491.3,320.3" fill="#3c3c3a"/><polygon points="1491.6,292.2 1493.4,292.2 1493.4,320.3 1492.5,321.2 1491.6,320.3" fill="#90908a"/><polygon points="1118.2,292.7 1120.5,292.7 1120.5,321.0 1119.3,322.2 1118.2,321.0" fill="#3c3c3a"/><polygon points="1118.5,292.7 1120.2,292.7 1120.2,321.0 1119.3,321.9 1118.5,321.0" fill="#90908a"/><polygon points="1179.3,293.2 1181.6,293.2 1181.6,321.7 1180.5,323.0 1179.3,321.7" fill="#3c3c3a"/><polygon points="1179.6,293.2 1181.4,293.2 1181.4,321.7 1180.5,322.7 1179.6,321.7" fill="#90908a"/><polygon points="1063.7,293.4 1066.0,293.4 1066.0,322.0 1064.8,323.2 1063.7,322.0" fill="#3c3c3a"/><polygon points="1064.0,293.4 1065.8,293.4 1065.8,322.0 1064.8,322.9 1064.0,322.0" fill="#90908a"/><polygon points="1488.7,293.4 1491.0,293.4 1491.0,322.0 1489.8,323.2 1488.7,322.0" fill="#3c3c3a"/><polygon points="1489.0,293.4 1490.8,293.4 1490.8,322.0 1489.8,322.9 1489.0,322.0" fill="#90908a"/><polygon points="1125.0,293.9 1127.4,293.9 1127.4,322.7 1126.2,324.0 1125.0,322.7" fill="#3c3c3a"/><polygon points="1125.3,293.9 1127.2,293.9 1127.2,322.7 1126.2,323.7 1125.3,322.7" fill="#90908a"/><polygon points="1187.4,294.5 1189.7,294.5 1189.7,323.5 1188.6,324.8 1187.4,323.5" fill="#3c3c3a"/><polygon points="1187.7,294.5 1189.5,294.5 1189.5,323.5 1188.6,324.5 1187.7,323.5" fill="#90908a"/><polygon points="1069.6,294.7 1072.0,294.7 1072.0,323.8 1070.8,325.1 1069.6,323.8" fill="#3c3c3a"/><polygon points="1069.9,294.7 1071.8,294.7 1071.8,323.8 1070.8,324.7 1069.9,323.8" fill="#90908a"/><polygon points="1485.9,294.7 1488.3,294.7 1488.3,323.8 1487.1,325.1 1485.9,323.8" fill="#3c3c3a"/><polygon points="1486.2,294.7 1488.0,294.7 1488.0,323.8 1487.1,324.7 1486.2,323.8" fill="#90908a"/><polygon points="1132.2,295.2 1134.6,295.2 1134.6,324.6 1133.4,325.9 1132.2,324.6" fill="#3c3c3a"/><polygon points="1132.5,295.2 1134.3,295.2 1134.3,324.6 1133.4,325.5 1132.5,324.6" fill="#90908a"/><polygon points="1433.7,295.4 1436.2,295.4 1436.2,324.8 1434.9,326.1 1433.7,324.8" fill="#3c3c3a"/><polygon points="1434.1,295.4 1435.9,295.4 1435.9,324.8 1434.9,325.8 1434.1,324.8" fill="#90908a"/><polygon points="1195.7,295.8 1198.2,295.8 1198.2,325.4 1196.9,326.7 1195.7,325.4" fill="#3c3c3a"/><polygon points="1196.0,295.8 1197.9,295.8 1197.9,325.4 1196.9,326.4 1196.0,325.4" fill="#90908a"/><polygon points="1075.8,296.0 1078.2,296.0 1078.2,325.6 1077.0,326.9 1075.8,325.6" fill="#3c3c3a"/><polygon points="1076.1,296.0 1078.0,296.0 1078.0,325.6 1077.0,326.6 1076.1,325.6" fill="#90908a"/><polygon points="1211.5,296.0 1213.9,296.0 1213.9,325.6 1212.7,326.9 1211.5,325.6" fill="#3c3c3a"/><polygon points="1211.8,296.0 1213.7,296.0 1213.7,325.6 1212.7,326.6 1211.8,325.6" fill="#90908a"/><polygon points="1483.0,296.0 1485.4,296.0 1485.4,325.6 1484.2,326.9 1483.0,325.6" fill="#3c3c3a"/><polygon points="1483.3,296.0 1485.2,296.0 1485.2,325.6 1484.2,326.6 1483.3,325.6" fill="#90908a"/><polygon points="1139.6,296.5 1142.0,296.5 1142.0,326.5 1140.8,327.8 1139.6,326.5" fill="#3c3c3a"/><polygon points="1139.9,296.5 1141.8,296.5 1141.8,326.5 1140.8,327.5 1139.9,326.5" fill="#90908a"/><polygon points="1447.0,296.7 1449.4,296.7 1449.4,326.7 1448.2,328.1 1447.0,326.7" fill="#3c3c3a"/><polygon points="1447.3,296.7 1449.2,296.7 1449.2,326.7 1448.2,327.7 1447.3,326.7" fill="#90908a"/><polygon points="1204.4,297.1 1206.9,297.1 1206.9,327.3 1205.7,328.6 1204.4,327.3" fill="#3c3c3a"/><polygon points="1204.7,297.1 1206.7,297.1 1206.7,327.3 1205.7,328.3 1204.7,327.3" fill="#90908a"/><polygon points="1082.1,297.3 1084.6,297.3 1084.6,327.6 1083.4,328.9 1082.1,327.6" fill="#3c3c3a"/><polygon points="1082.5,297.3 1084.4,297.3 1084.4,327.6 1083.4,328.6 1082.5,327.6" fill="#90908a"/><polygon points="1203.2,297.3 1205.7,297.3 1205.7,327.6 1204.5,328.9 1203.2,327.6" fill="#3c3c3a"/><polygon points="1203.5,297.3 1205.5,297.3 1205.5,327.6 1204.5,328.6 1203.5,327.6" fill="#90908a"/><polygon points="1480.0,297.3 1482.5,297.3 1482.5,327.6 1481.2,328.9 1480.0,327.6" fill="#3c3c3a"/><polygon points="1480.3,297.3 1482.2,297.3 1482.2,327.6 1481.2,328.6 1480.3,327.6" fill="#90908a"/><polygon points="1147.3,297.9 1149.8,297.9 1149.8,328.4 1148.5,329.8 1147.3,328.4" fill="#3c3c3a"/><polygon points="1147.6,297.9 1149.5,297.9 1149.5,328.4 1148.5,329.4 1147.6,328.4" fill="#90908a"/><polygon points="1460.7,298.1 1463.2,298.1 1463.2,328.7 1462.0,330.1 1460.7,328.7" fill="#3c3c3a"/><polygon points="1461.0,298.1 1463.0,298.1 1463.0,328.7 1462.0,329.7 1461.0,328.7" fill="#90908a"/><polygon points="1213.5,298.5 1216.0,298.5 1216.0,329.3 1214.7,330.7 1213.5,329.3" fill="#3c3c3a"/><polygon points="1213.8,298.5 1215.7,298.5 1215.7,329.3 1214.7,330.3 1213.8,329.3" fill="#90908a"/><polygon points="1088.8,298.8 1091.3,298.8 1091.3,329.6 1090.1,331.0 1088.8,329.6" fill="#3c3c3a"/><polygon points="1089.1,298.8 1091.1,298.8 1091.1,329.6 1090.1,330.6 1089.1,329.6" fill="#90908a"/><polygon points="1194.6,298.8 1197.2,298.8 1197.2,329.6 1195.9,331.0 1194.6,329.6" fill="#3c3c3a"/><polygon points="1195.0,298.8 1196.9,298.8 1196.9,329.6 1195.9,330.6 1195.0,329.6" fill="#90908a"/><polygon points="1476.8,298.8 1479.4,298.8 1479.4,329.6 1478.1,331.0 1476.8,329.6" fill="#3c3c3a"/><polygon points="1477.2,298.8 1479.1,298.8 1479.1,329.6 1478.1,330.6 1477.2,329.6" fill="#90908a"/><polygon points="1155.3,299.4 1157.8,299.4 1157.8,330.5 1156.5,331.9 1155.3,330.5" fill="#3c3c3a"/><polygon points="1155.6,299.4 1157.6,299.4 1157.6,330.5 1156.5,331.5 1155.6,330.5" fill="#90908a"/><polygon points="1475.0,299.6 1477.6,299.6 1477.6,330.8 1476.3,332.2 1475.0,330.8" fill="#3c3c3a"/><polygon points="1475.3,299.6 1477.3,299.6 1477.3,330.8 1476.3,331.8 1475.3,330.8" fill="#90908a"/><polygon points="1222.9,300.0 1225.5,300.0 1225.5,331.4 1224.2,332.8 1222.9,331.4" fill="#3c3c3a"/><polygon points="1223.2,300.0 1225.2,300.0 1225.2,331.4 1224.2,332.4 1223.2,331.4" fill="#90908a"/><polygon points="1095.7,300.2 1098.3,300.2 1098.3,331.7 1097.0,333.1 1095.7,331.7" fill="#3c3c3a"/><polygon points="1096.0,300.2 1098.0,300.2 1098.0,331.7 1097.0,332.7 1096.0,331.7" fill="#90908a"/><polygon points="1185.7,300.2 1188.3,300.2 1188.3,331.7 1187.0,333.1 1185.7,331.7" fill="#3c3c3a"/><polygon points="1186.0,300.2 1188.0,300.2 1188.0,331.7 1187.0,332.7 1186.0,331.7" fill="#90908a"/><polygon points="1473.6,300.2 1476.2,300.2 1476.2,331.7 1474.9,333.1 1473.6,331.7" fill="#3c3c3a"/><polygon points="1473.9,300.2 1475.9,300.2 1475.9,331.7 1474.9,332.7 1473.9,331.7" fill="#90908a"/><polygon points="1163.6,300.9 1166.2,300.9 1166.2,332.6 1164.9,334.0 1163.6,332.6" fill="#3c3c3a"/><polygon points="1163.9,300.9 1165.9,300.9 1165.9,332.6 1164.9,333.7 1163.9,332.6" fill="#90908a"/><polygon points="1232.7,301.5 1235.3,301.5 1235.3,333.6 1234.0,335.0 1232.7,333.6" fill="#3c3c3a"/><polygon points="1233.0,301.5 1235.0,301.5 1235.0,333.6 1234.0,334.6 1233.0,333.6" fill="#90908a"/><polygon points="1102.9,301.8 1105.6,301.8 1105.6,333.9 1104.2,335.3 1102.9,333.9" fill="#3c3c3a"/><polygon points="1103.3,301.8 1105.3,301.8 1105.3,333.9 1104.2,334.9 1103.3,333.9" fill="#90908a"/><polygon points="1176.4,301.8 1179.0,301.8 1179.0,333.9 1177.7,335.3 1176.4,333.9" fill="#3c3c3a"/><polygon points="1176.7,301.8 1178.8,301.8 1178.8,333.9 1177.7,334.9 1176.7,333.9" fill="#90908a"/><polygon points="1470.2,301.8 1472.9,301.8 1472.9,333.9 1471.5,335.3 1470.2,333.9" fill="#3c3c3a"/><polygon points="1470.5,301.8 1472.6,301.8 1472.6,333.9 1471.5,334.9 1470.5,333.9" fill="#90908a"/><polygon points="1172.3,302.4 1174.9,302.4 1174.9,334.8 1173.6,336.3 1172.3,334.8" fill="#3c3c3a"/><polygon points="1172.6,302.4 1174.7,302.4 1174.7,334.8 1173.6,335.9 1172.6,334.8" fill="#90908a"/><polygon points="1242.9,303.1 1245.6,303.1 1245.6,335.8 1244.2,337.3 1242.9,335.8" fill="#3c3c3a"/><polygon points="1243.2,303.1 1245.3,303.1 1245.3,335.8 1244.2,336.9 1243.2,335.8" fill="#90908a"/><polygon points="1110.4,303.4 1113.1,303.4 1113.1,336.2 1111.8,337.6 1110.4,336.2" fill="#3c3c3a"/><polygon points="1110.8,303.4 1112.8,303.4 1112.8,336.2 1111.8,337.2 1110.8,336.2" fill="#90908a"/><polygon points="1166.7,303.4 1169.4,303.4 1169.4,336.2 1168.0,337.6 1166.7,336.2" fill="#3c3c3a"/><polygon points="1167.0,303.4 1169.1,303.4 1169.1,336.2 1168.0,337.2 1167.0,336.2" fill="#90908a"/><polygon points="1466.7,303.4 1469.4,303.4 1469.4,336.2 1468.0,337.6 1466.7,336.2" fill="#3c3c3a"/><polygon points="1467.0,303.4 1469.1,303.4 1469.1,336.2 1468.0,337.2 1467.0,336.2" fill="#90908a"/><polygon points="1181.3,304.1 1184.0,304.1 1184.0,337.2 1182.7,338.6 1181.3,337.2" fill="#3c3c3a"/><polygon points="1181.7,304.1 1183.8,304.1 1183.8,337.2 1182.7,338.2 1181.7,337.2" fill="#90908a"/><polygon points="1253.5,304.8 1256.2,304.8 1256.2,338.2 1254.9,339.6 1253.5,338.2" fill="#3c3c3a"/><polygon points="1253.9,304.8 1256.0,304.8 1256.0,338.2 1254.9,339.3 1253.9,338.2" fill="#90908a"/><polygon points="1118.2,305.0 1121.0,305.0 1121.0,338.5 1119.6,340.0 1118.2,338.5" fill="#3c3c3a"/><polygon points="1118.6,305.0 1120.7,305.0 1120.7,338.5 1119.6,339.6 1118.6,338.5" fill="#90908a"/><polygon points="1156.5,305.0 1159.3,305.0 1159.3,338.5 1157.9,340.0 1156.5,338.5" fill="#3c3c3a"/><polygon points="1156.9,305.0 1159.0,305.0 1159.0,338.5 1157.9,339.6 1156.9,338.5" fill="#90908a"/><polygon points="1463.0,305.0 1465.8,305.0 1465.8,338.5 1464.4,340.0 1463.0,338.5" fill="#3c3c3a"/><polygon points="1463.4,305.0 1465.5,305.0 1465.5,338.5 1464.4,339.6 1463.4,338.5" fill="#90908a"/><polygon points="1190.7,305.8 1193.5,305.8 1193.5,339.6 1192.1,341.1 1190.7,339.6" fill="#3c3c3a"/><polygon points="1191.1,305.8 1193.2,305.8 1193.2,339.6 1192.1,340.7 1191.1,339.6" fill="#90908a"/><polygon points="1401.9,306.3 1404.7,306.3 1404.7,340.3 1403.3,341.8 1401.9,340.3" fill="#3c3c3a"/><polygon points="1402.3,306.3 1404.4,306.3 1404.4,340.3 1403.3,341.4 1402.3,340.3" fill="#90908a"/><polygon points="1264.6,306.5 1267.4,306.5 1267.4,340.6 1266.0,342.1 1264.6,340.6" fill="#3c3c3a"/><polygon points="1265.0,306.5 1267.1,306.5 1267.1,340.6 1266.0,341.8 1265.0,340.6" fill="#90908a"/><polygon points="1126.4,306.8 1129.2,306.8 1129.2,341.0 1127.8,342.5 1126.4,341.0" fill="#3c3c3a"/><polygon points="1126.8,306.8 1128.9,306.8 1128.9,341.0 1127.8,342.1 1126.8,341.0" fill="#90908a"/><polygon points="1459.2,306.8 1462.0,306.8 1462.0,341.0 1460.6,342.5 1459.2,341.0" fill="#3c3c3a"/><polygon points="1459.5,306.8 1461.7,306.8 1461.7,341.0 1460.6,342.1 1459.5,341.0" fill="#90908a"/><polygon points="1146.0,306.8 1148.8,306.8 1148.8,341.0 1147.4,342.5 1146.0,341.0" fill="#3c3c3a"/><polygon points="1146.3,306.8 1148.5,306.8 1148.5,341.0 1147.4,342.1 1146.3,341.0" fill="#90908a"/><polygon points="1200.6,307.5 1203.4,307.5 1203.4,342.1 1202.0,343.6 1200.6,342.1" fill="#3c3c3a"/><polygon points="1201.0,307.5 1203.2,307.5 1203.2,342.1 1202.0,343.2 1201.0,342.1" fill="#90908a"/><polygon points="1416.5,308.1 1419.4,308.1 1419.4,342.8 1418.0,344.4 1416.5,342.8" fill="#3c3c3a"/><polygon points="1416.9,308.1 1419.1,308.1 1419.1,342.8 1418.0,344.0 1416.9,342.8" fill="#90908a"/><polygon points="1276.2,308.3 1279.1,308.3 1279.1,343.2 1277.6,344.7 1276.2,343.2" fill="#3c3c3a"/><polygon points="1276.6,308.3 1278.8,308.3 1278.8,343.2 1277.6,344.4 1276.6,343.2" fill="#90908a"/><polygon points="1134.9,308.6 1137.8,308.6 1137.8,343.6 1136.4,345.1 1134.9,343.6" fill="#3c3c3a"/><polygon points="1135.3,308.6 1137.5,308.6 1137.5,343.6 1136.4,344.7 1135.3,343.6" fill="#90908a"/><polygon points="1295.0,308.6 1297.9,308.6 1297.9,343.6 1296.5,345.1 1295.0,343.6" fill="#3c3c3a"/><polygon points="1295.4,308.6 1297.6,308.6 1297.6,343.6 1296.5,344.7 1295.4,343.6" fill="#90908a"/><polygon points="1455.1,308.6 1458.0,308.6 1458.0,343.6 1456.6,345.1 1455.1,343.6" fill="#3c3c3a"/><polygon points="1455.5,308.6 1457.7,308.6 1457.7,343.6 1456.6,344.7 1455.5,343.6" fill="#90908a"/><polygon points="1210.9,309.4 1213.8,309.4 1213.8,344.7 1212.3,346.3 1210.9,344.7" fill="#3c3c3a"/><polygon points="1211.3,309.4 1213.5,309.4 1213.5,344.7 1212.3,345.9 1211.3,344.7" fill="#90908a"/><polygon points="1431.8,309.9 1434.8,309.9 1434.8,345.5 1433.3,347.1 1431.8,345.5" fill="#3c3c3a"/><polygon points="1432.2,309.9 1434.5,309.9 1434.5,345.5 1433.3,346.7 1432.2,345.5" fill="#90908a"/><polygon points="1288.3,310.2 1291.3,310.2 1291.3,345.9 1289.8,347.5 1288.3,345.9" fill="#3c3c3a"/><polygon points="1288.7,310.2 1291.0,310.2 1291.0,345.9 1289.8,347.1 1288.7,345.9" fill="#90908a"/><polygon points="1287.2,310.5 1290.1,310.5 1290.1,346.3 1288.6,347.9 1287.2,346.3" fill="#3c3c3a"/><polygon points="1287.6,310.5 1289.8,310.5 1289.8,346.3 1288.6,347.5 1287.6,346.3" fill="#90908a"/><polygon points="1143.9,310.5 1146.8,310.5 1146.8,346.3 1145.3,347.9 1143.9,346.3" fill="#3c3c3a"/><polygon points="1144.3,310.5 1146.5,310.5 1146.5,346.3 1145.3,347.5 1144.3,346.3" fill="#90908a"/><polygon points="1451.0,310.5 1453.9,310.5 1453.9,346.3 1452.4,347.9 1451.0,346.3" fill="#3c3c3a"/><polygon points="1451.3,310.5 1453.6,310.5 1453.6,346.3 1452.4,347.5 1451.3,346.3" fill="#90908a"/><polygon points="1221.7,311.3 1224.6,311.3 1224.6,347.5 1223.2,349.1 1221.7,347.5" fill="#3c3c3a"/><polygon points="1222.0,311.3 1224.3,311.3 1224.3,347.5 1223.2,348.7 1222.0,347.5" fill="#90908a"/><polygon points="1447.8,311.9 1450.8,311.9 1450.8,348.3 1449.3,349.9 1447.8,348.3" fill="#3c3c3a"/><polygon points="1448.2,311.9 1450.5,311.9 1450.5,348.3 1449.3,349.5 1448.2,348.3" fill="#90908a"/><polygon points="1301.0,312.2 1304.0,312.2 1304.0,348.7 1302.5,350.3 1301.0,348.7" fill="#3c3c3a"/><polygon points="1301.4,312.2 1303.7,312.2 1303.7,348.7 1302.5,349.9 1301.4,348.7" fill="#90908a"/><polygon points="1153.2,312.5 1156.2,312.5 1156.2,349.1 1154.7,350.7 1153.2,349.1" fill="#3c3c3a"/><polygon points="1153.6,312.5 1155.9,312.5 1155.9,349.1 1154.7,350.3 1153.6,349.1" fill="#90908a"/><polygon points="1278.9,312.5 1282.0,312.5 1282.0,349.1 1280.4,350.7 1278.9,349.1" fill="#3c3c3a"/><polygon points="1279.3,312.5 1281.7,312.5 1281.7,349.1 1280.4,350.3 1279.3,349.1" fill="#90908a"/><polygon points="1446.6,312.5 1449.6,312.5 1449.6,349.1 1448.1,350.7 1446.6,349.1" fill="#3c3c3a"/><polygon points="1446.9,312.5 1449.3,312.5 1449.3,349.1 1448.1,350.3 1446.9,349.1" fill="#90908a"/><polygon points="1232.9,313.4 1236.0,313.4 1236.0,350.4 1234.5,352.0 1232.9,350.4" fill="#3c3c3a"/><polygon points="1233.3,313.4 1235.7,313.4 1235.7,350.4 1234.5,351.6 1233.3,350.4" fill="#90908a"/><polygon points="1314.3,314.3 1317.4,314.3 1317.4,351.7 1315.9,353.3 1314.3,351.7" fill="#3c3c3a"/><polygon points="1314.7,314.3 1317.1,314.3 1317.1,351.7 1315.9,352.9 1314.7,351.7" fill="#90908a"/><polygon points="1163.0,314.6 1166.1,314.6 1166.1,352.1 1164.6,353.7 1163.0,352.1" fill="#3c3c3a"/><polygon points="1163.4,314.6 1165.8,314.6 1165.8,352.1 1164.6,353.3 1163.4,352.1" fill="#90908a"/><polygon points="1270.3,314.6 1273.4,314.6 1273.4,352.1 1271.8,353.7 1270.3,352.1" fill="#3c3c3a"/><polygon points="1270.7,314.6 1273.1,314.6 1273.1,352.1 1271.8,353.3 1270.7,352.1" fill="#90908a"/><polygon points="1442.0,314.6 1445.0,314.6 1445.0,352.1 1443.5,353.7 1442.0,352.1" fill="#3c3c3a"/><polygon points="1442.4,314.6 1444.7,314.6 1444.7,352.1 1443.5,353.3 1442.4,352.1" fill="#90908a"/><polygon points="1244.8,315.5 1247.9,315.5 1247.9,353.4 1246.3,355.1 1244.8,353.4" fill="#3c3c3a"/><polygon points="1245.2,315.5 1247.6,315.5 1247.6,353.4 1246.3,354.7 1245.2,353.4" fill="#90908a"/><polygon points="1328.3,316.4 1331.4,316.4 1331.4,354.8 1329.9,356.4 1328.3,354.8" fill="#3c3c3a"/><polygon points="1328.7,316.4 1331.1,316.4 1331.1,354.8 1329.9,356.0 1328.7,354.8" fill="#90908a"/><polygon points="1173.3,316.8 1176.5,316.8 1176.5,355.2 1174.9,356.9 1173.3,355.2" fill="#3c3c3a"/><polygon points="1173.7,316.8 1176.1,316.8 1176.1,355.2 1174.9,356.5 1173.7,355.2" fill="#90908a"/><polygon points="1261.2,316.8 1264.4,316.8 1264.4,355.2 1262.8,356.9 1261.2,355.2" fill="#3c3c3a"/><polygon points="1261.6,316.8 1264.1,316.8 1264.1,355.2 1262.8,356.5 1261.6,355.2" fill="#90908a"/><polygon points="1437.1,316.8 1440.3,316.8 1440.3,355.2 1438.7,356.9 1437.1,355.2" fill="#3c3c3a"/><polygon points="1437.5,316.8 1440.0,316.8 1440.0,355.2 1438.7,356.5 1437.5,355.2" fill="#90908a"/><polygon points="1257.2,317.7 1260.4,317.7 1260.4,356.6 1258.8,358.3 1257.2,356.6" fill="#3c3c3a"/><polygon points="1257.6,317.7 1260.1,317.7 1260.1,356.6 1258.8,357.9 1257.6,356.6" fill="#90908a"/><polygon points="1342.9,318.7 1346.2,318.7 1346.2,358.0 1344.6,359.7 1342.9,358.0" fill="#3c3c3a"/><polygon points="1343.4,318.7 1345.9,318.7 1345.9,358.0 1344.6,359.3 1343.4,358.0" fill="#90908a"/><polygon points="1184.1,319.1 1187.3,319.1 1187.3,358.5 1185.7,360.2 1184.1,358.5" fill="#3c3c3a"/><polygon points="1184.5,319.1 1187.0,319.1 1187.0,358.5 1185.7,359.8 1184.5,358.5" fill="#90908a"/><polygon points="1251.7,319.1 1255.0,319.1 1255.0,358.5 1253.3,360.2 1251.7,358.5" fill="#3c3c3a"/><polygon points="1252.1,319.1 1254.6,319.1 1254.6,358.5 1253.3,359.8 1252.1,358.5" fill="#90908a"/><polygon points="1432.0,319.1 1435.3,319.1 1435.3,358.5 1433.7,360.2 1432.0,358.5" fill="#3c3c3a"/><polygon points="1432.5,319.1 1435.0,319.1 1435.0,358.5 1433.7,359.8 1432.5,358.5" fill="#90908a"/><polygon points="1270.3,320.1 1273.6,320.1 1273.6,359.9 1271.9,361.7 1270.3,359.9" fill="#3c3c3a"/><polygon points="1270.7,320.1 1273.2,320.1 1273.2,359.9 1271.9,361.2 1270.7,359.9" fill="#90908a"/><polygon points="1358.4,321.1 1361.7,321.1 1361.7,361.4 1360.0,363.2 1358.4,361.4" fill="#3c3c3a"/><polygon points="1358.8,321.1 1361.4,321.1 1361.4,361.4 1360.0,362.7 1358.8,361.4" fill="#90908a"/><polygon points="1195.4,321.5 1198.8,321.5 1198.8,361.9 1197.1,363.7 1195.4,361.9" fill="#3c3c3a"/><polygon points="1195.9,321.5 1198.4,321.5 1198.4,361.9 1197.1,363.3 1195.9,361.9" fill="#90908a"/><polygon points="1241.7,321.5 1245.0,321.5 1245.0,361.9 1243.4,363.7 1241.7,361.9" fill="#3c3c3a"/><polygon points="1242.1,321.5 1244.7,321.5 1244.7,361.9 1243.4,363.3 1242.1,361.9" fill="#90908a"/><polygon points="1426.7,321.5 1430.0,321.5 1430.0,361.9 1428.4,363.7 1426.7,361.9" fill="#3c3c3a"/><polygon points="1427.1,321.5 1429.7,321.5 1429.7,361.9 1428.4,363.3 1427.1,361.9" fill="#90908a"/><polygon points="1284.0,322.6 1287.4,322.6 1287.4,363.5 1285.7,365.3 1284.0,363.5" fill="#3c3c3a"/><polygon points="1284.5,322.6 1287.0,322.6 1287.0,363.5 1285.7,364.8 1284.5,363.5" fill="#90908a"/><polygon points="1374.6,323.7 1378.0,323.7 1378.0,365.0 1376.3,366.8 1374.6,365.0" fill="#3c3c3a"/><polygon points="1375.0,323.7 1377.7,323.7 1377.7,365.0 1376.3,366.4 1375.0,365.0" fill="#90908a"/><polygon points="1207.4,324.0 1210.8,324.0 1210.8,365.5 1209.1,367.4 1207.4,365.5" fill="#3c3c3a"/><polygon points="1207.9,324.0 1210.5,324.0 1210.5,365.5 1209.1,366.9 1207.9,365.5" fill="#90908a"/><polygon points="1231.1,324.0 1234.6,324.0 1234.6,365.5 1232.9,367.4 1231.1,365.5" fill="#3c3c3a"/><polygon points="1231.6,324.0 1234.2,324.0 1234.2,365.5 1232.9,366.9 1231.6,365.5" fill="#90908a"/><polygon points="1421.1,324.0 1424.5,324.0 1424.5,365.5 1422.8,367.4 1421.1,365.5" fill="#3c3c3a"/><polygon points="1421.5,324.0 1424.2,324.0 1424.2,365.5 1422.8,366.9 1421.5,365.5" fill="#90908a"/><polygon points="1298.5,325.2 1302.0,325.2 1302.0,367.2 1300.2,369.0 1298.5,367.2" fill="#3c3c3a"/><polygon points="1298.9,325.2 1301.6,325.2 1301.6,367.2 1300.2,368.5 1298.9,367.2" fill="#90908a"/><polygon points="1391.7,326.3 1395.2,326.3 1395.2,368.8 1393.5,370.7 1391.7,368.8" fill="#3c3c3a"/><polygon points="1392.2,326.3 1394.9,326.3 1394.9,368.8 1393.5,370.2 1392.2,368.8" fill="#90908a"/><polygon points="1220.0,326.7 1223.5,326.7 1223.5,369.4 1221.8,371.2 1220.0,369.4" fill="#3c3c3a"/><polygon points="1220.5,326.7 1223.2,326.7 1223.2,369.4 1221.8,370.8 1220.5,369.4" fill="#90908a"/><polygon points="1415.1,326.7 1418.7,326.7 1418.7,369.4 1416.9,371.2 1415.1,369.4" fill="#3c3c3a"/><polygon points="1415.6,326.7 1418.3,326.7 1418.3,369.4 1416.9,370.8 1415.6,369.4" fill="#90908a"/><polygon points="1313.8,327.9 1317.3,327.9 1317.3,371.1 1315.6,373.0 1313.8,371.1" fill="#3c3c3a"/><polygon points="1314.2,327.9 1317.0,327.9 1317.0,371.1 1315.6,372.5 1314.2,371.1" fill="#90908a"/><polygon points="1409.8,329.1 1413.4,329.1 1413.4,372.8 1411.6,374.7 1409.8,372.8" fill="#3c3c3a"/><polygon points="1410.3,329.1 1413.0,329.1 1413.0,372.8 1411.6,374.3 1410.3,372.8" fill="#90908a"/><polygon points="1233.3,329.6 1237.0,329.6 1237.0,373.4 1235.2,375.3 1233.3,373.4" fill="#3c3c3a"/><polygon points="1233.8,329.6 1236.6,329.6 1236.6,373.4 1235.2,374.9 1233.8,373.4" fill="#90908a"/><polygon points="1408.9,329.6 1412.5,329.6 1412.5,373.4 1410.7,375.3 1408.9,373.4" fill="#3c3c3a"/><polygon points="1409.4,329.6 1412.1,329.6 1412.1,373.4 1410.7,374.9 1409.4,373.4" fill="#90908a"/><polygon points="1329.9,330.8 1333.6,330.8 1333.6,375.2 1331.8,377.2 1329.9,375.2" fill="#3c3c3a"/><polygon points="1330.4,330.8 1333.2,330.8 1333.2,375.2 1331.8,376.7 1330.4,375.2" fill="#90908a"/><polygon points="1247.4,332.6 1251.2,332.6 1251.2,377.7 1249.3,379.7 1247.4,377.7" fill="#3c3c3a"/><polygon points="1247.9,332.6 1250.8,332.6 1250.8,377.7 1249.3,379.2 1247.9,377.7" fill="#90908a"/><polygon points="1402.3,332.6 1406.0,332.6 1406.0,377.7 1404.1,379.7 1402.3,377.7" fill="#3c3c3a"/><polygon points="1402.7,332.6 1405.6,332.6 1405.6,377.7 1404.1,379.2 1402.7,377.7" fill="#90908a"/><polygon points="1347.0,333.9 1350.8,333.9 1350.8,379.6 1348.9,381.6 1347.0,379.6" fill="#3c3c3a"/><polygon points="1347.5,333.9 1350.4,333.9 1350.4,379.6 1348.9,381.1 1347.5,379.6" fill="#90908a"/><polygon points="1262.4,335.7 1266.2,335.7 1266.2,382.2 1264.3,384.3 1262.4,382.2" fill="#3c3c3a"/><polygon points="1262.9,335.7 1265.8,335.7 1265.8,382.2 1264.3,383.7 1262.9,382.2" fill="#90908a"/><polygon points="1395.2,335.7 1399.1,335.7 1399.1,382.2 1397.1,384.3 1395.2,382.2" fill="#3c3c3a"/><polygon points="1395.7,335.7 1398.7,335.7 1398.7,382.2 1397.1,383.7 1395.7,382.2" fill="#90908a"/><polygon points="1365.2,337.2 1369.1,337.2 1369.1,384.2 1367.1,386.3 1365.2,384.2" fill="#3c3c3a"/><polygon points="1365.7,337.2 1368.7,337.2 1368.7,384.2 1367.1,385.8 1365.7,384.2" fill="#90908a"/><polygon points="1278.2,339.1 1282.2,339.1 1282.2,387.0 1280.2,389.1 1278.2,387.0" fill="#3c3c3a"/><polygon points="1278.8,339.1 1281.8,339.1 1281.8,387.0 1280.2,388.6 1278.8,387.0" fill="#90908a"/><polygon points="1387.8,339.1 1391.7,339.1 1391.7,387.0 1389.8,389.1 1387.8,387.0" fill="#3c3c3a"/><polygon points="1388.3,339.1 1391.3,339.1 1391.3,387.0 1389.8,388.6 1388.3,387.0" fill="#90908a"/><polygon points="1384.4,340.6 1388.4,340.6 1388.4,389.2 1386.4,391.3 1384.4,389.2" fill="#3c3c3a"/><polygon points="1385.0,340.6 1388.0,340.6 1388.0,389.2 1386.4,390.8 1385.0,389.2" fill="#90908a"/><polygon points="1295.1,342.7 1299.2,342.7 1299.2,392.1 1297.1,394.3 1295.1,392.1" fill="#3c3c3a"/><polygon points="1295.6,342.7 1298.8,342.7 1298.8,392.1 1297.1,393.8 1295.6,392.1" fill="#90908a"/><polygon points="1379.9,342.7 1383.9,342.7 1383.9,392.1 1381.9,394.3 1379.9,392.1" fill="#3c3c3a"/><polygon points="1380.4,342.7 1383.5,342.7 1383.5,392.1 1381.9,393.8 1380.4,392.1" fill="#90908a"/><polygon points="1313.1,346.5 1317.3,346.5 1317.3,397.6 1315.2,399.8 1313.1,397.6" fill="#3c3c3a"/><polygon points="1313.6,346.5 1316.8,346.5 1316.8,397.6 1315.2,399.3 1313.6,397.6" fill="#90908a"/><polygon points="1371.4,346.5 1375.6,346.5 1375.6,397.6 1373.5,399.8 1371.4,397.6" fill="#3c3c3a"/><polygon points="1372.0,346.5 1375.2,346.5 1375.2,397.6 1373.5,399.3 1372.0,397.6" fill="#90908a"/><polygon points="1332.2,350.6 1336.6,350.6 1336.6,403.4 1334.4,405.7 1332.2,403.4" fill="#3c3c3a"/><polygon points="1332.8,350.6 1336.1,350.6 1336.1,403.4 1334.4,405.1 1332.8,403.4" fill="#90908a"/><polygon points="1362.4,350.6 1366.7,350.6 1366.7,403.4 1364.6,405.7 1362.4,403.4" fill="#3c3c3a"/><polygon points="1363.0,350.6 1366.3,350.6 1366.3,403.4 1364.6,405.1 1363.0,403.4" fill="#90908a"/><polygon points="1352.8,355.0 1357.2,355.0 1357.2,409.6 1355.0,412.0 1352.8,409.6" fill="#3c3c3a"/><polygon points="1353.3,355.0 1356.8,355.0 1356.8,409.6 1355.0,411.4 1353.3,409.6" fill="#90908a"/><polygon points="1262.0,127.2 1393.7,102.2 1393.7,176.0 1262.0,176.0" fill="#884d38" stroke="#1a1a1a" stroke-width="0.7"/><path d="M1262 139.6 L1393.7 118.6 M1265.5 126.6 L1265.5 153" stroke="#2e1a12" stroke-width="0.7" fill="none"/><polygon points="1397.5,104.1 1510.4,161.2 1510.4,264.0 1397.5,298.0" fill="#8f5239"/><polygon points="1438.7,128.5 1444.3,131.2 1444.3,209.7 1438.7,209.2" fill="#2a2c30"/><polygon points="1438.7,214.8 1444.3,215.1 1444.3,244.8 1438.7,245.4" fill="#2a2c30"/><polygon points="1438.7,251.8 1444.3,251.1 1444.3,283.9 1438.7,285.6" fill="#2a2c30"/><polygon points="1439.5,179.2 1443.5,180.2 1443.5,205.8 1439.5,205.4" fill="#3a3c42"/><polygon points="1448.0,133.0 1454.1,136.0 1454.1,210.5 1448.0,210.0" fill="#2a2c30"/><polygon points="1448.0,215.3 1454.1,215.7 1454.1,243.9 1448.0,244.5" fill="#2a2c30"/><polygon points="1448.0,250.6 1454.1,249.8 1454.1,280.9 1448.0,282.8" fill="#2a2c30"/><polygon points="1448.8,181.4 1453.3,182.5 1453.3,206.8 1448.8,206.3" fill="#3a3c42"/><polygon points="1457.3,137.5 1461.4,139.5 1461.4,211.1 1457.3,210.8" fill="#2a2c30"/><polygon points="1457.3,215.8 1461.4,216.1 1461.4,243.1 1457.3,243.5" fill="#2a2c30"/><polygon points="1457.3,249.4 1461.4,248.9 1461.4,278.8 1457.3,280.0" fill="#2a2c30"/><polygon points="1458.1,183.6 1460.6,184.2 1460.6,207.6 1458.1,207.3" fill="#3a3c42"/><polygon points="1464.6,141.1 1468.8,143.2 1468.8,211.7 1464.6,211.4" fill="#2a2c30"/><polygon points="1464.6,216.2 1468.8,216.5 1468.8,242.4 1464.6,242.8" fill="#2a2c30"/><polygon points="1464.6,248.4 1468.8,247.9 1468.8,276.5 1464.6,277.8" fill="#2a2c30"/><polygon points="1465.4,185.3 1468.0,185.9 1468.0,208.3 1465.4,208.0" fill="#3a3c42"/><polygon points="1472.4,144.9 1476.1,146.7 1476.1,212.3 1472.4,212.0" fill="#2a2c30"/><polygon points="1472.4,216.7 1476.1,216.9 1476.1,241.7 1472.4,242.0" fill="#2a2c30"/><polygon points="1472.4,247.4 1476.1,246.9 1476.1,274.3 1472.4,275.5" fill="#2a2c30"/><polygon points="1473.2,187.1 1475.3,187.6 1475.3,209.1 1473.2,208.8" fill="#3a3c42"/><polygon points="1479.3,148.3 1482.2,149.7 1482.2,212.8 1479.3,212.6" fill="#2a2c30"/><polygon points="1479.3,217.0 1482.2,217.2 1482.2,241.1 1479.3,241.4" fill="#2a2c30"/><polygon points="1479.3,246.5 1482.2,246.1 1482.2,272.5 1479.3,273.4" fill="#2a2c30"/><polygon points="1480.1,188.7 1481.4,189.0 1481.4,209.7 1480.1,209.5" fill="#3a3c42"/><polygon points="1485.4,151.2 1488.4,152.7 1488.4,213.3 1485.4,213.1" fill="#2a2c30"/><polygon points="1485.4,217.4 1488.4,217.5 1488.4,240.5 1485.4,240.8" fill="#2a2c30"/><polygon points="1485.4,245.7 1488.4,245.3 1488.4,270.6 1485.4,271.5" fill="#2a2c30"/><polygon points="1486.2,190.2 1487.6,190.5 1487.6,210.3 1486.2,210.2" fill="#3a3c42"/><polygon points="1490.8,153.9 1494.5,155.7 1494.5,213.8 1490.8,213.5" fill="#2a2c30"/><polygon points="1490.8,217.7 1494.5,217.9 1494.5,239.9 1490.8,240.2" fill="#2a2c30"/><polygon points="1490.8,245.0 1494.5,244.5 1494.5,268.8 1490.8,269.9" fill="#2a2c30"/><polygon points="1491.6,191.4 1493.7,191.9 1493.7,210.9 1491.6,210.7" fill="#3a3c42"/><polygon points="1432.0,121.9 1438.7,125.3 1438.7,285.6 1432.0,287.6" fill="#995840"/><polygon points="1444.3,128.1 1448.0,130.0 1448.0,282.8 1444.3,283.9" fill="#995840"/><polygon points="1454.1,133.0 1457.3,134.6 1457.3,280.0 1454.1,280.9" fill="#995840"/><polygon points="1461.4,136.7 1464.6,138.3 1464.6,277.8 1461.4,278.8" fill="#995840"/><polygon points="1468.8,140.4 1472.4,142.3 1472.4,275.5 1468.8,276.5" fill="#995840"/><polygon points="1476.1,144.1 1479.3,145.7 1479.3,273.4 1476.1,274.3" fill="#995840"/><polygon points="1482.2,147.2 1485.4,148.8 1485.4,271.5 1482.2,272.5" fill="#995840"/><polygon points="1488.4,150.3 1490.8,151.5 1490.8,269.9 1488.4,270.6" fill="#995840"/><polygon points="1494.5,153.1 1510.4,161.2 1510.4,264.0 1494.5,268.8" fill="#9b5b41" stroke="#1a1a1a" stroke-width="0.5"/><polygon points="1497.0,172.6 1499.8,173.6 1499.8,205.7 1497.0,205.2" fill="#2a2c30"/><polygon points="1497.0,219.5 1499.8,219.6 1499.8,238.4 1497.0,238.6" fill="#2a2c30"/><polygon points="1497.0,245.7 1499.8,245.3 1499.8,265.2 1497.0,266.1" fill="#2a2c30"/><polygon points="1501.5,174.3 1504.3,175.3 1504.3,206.3 1501.5,205.9" fill="#2a2c30"/><polygon points="1501.5,219.7 1504.3,219.8 1504.3,237.9 1501.5,238.2" fill="#2a2c30"/><polygon points="1501.5,245.1 1504.3,244.7 1504.3,264.0 1501.5,264.8" fill="#2a2c30"/><polygon points="1506.0,176.0 1508.6,177.0 1508.6,206.9 1506.0,206.6" fill="#2a2c30"/><polygon points="1506.0,219.9 1508.6,220.0 1508.6,237.6 1506.0,237.8" fill="#2a2c30"/><polygon points="1506.0,244.4 1508.6,244.1 1508.6,262.7 1506.0,263.5" fill="#2a2c30"/><polygon points="1510.4,191.5 1520.0,191.5 1520.0,261.2 1510.4,264.0" fill="#9d5e44" stroke="#1a1a1a" stroke-width="0.5"/><polygon points="1397.5,104.1 1438.0,124.6 1438.0,285.8 1397.5,298.0" fill="#9d5e44"/><polygon points="1399.0,123.7 1408.8,127.9 1408.8,166.3 1399.0,163.8" fill="#2a2c30" stroke="#1a1a1a" stroke-width="0.5"/><polygon points="1400.2,142.9 1407.6,145.5 1407.6,164.4 1400.2,162.4" fill="#17181a"/><polygon points="1412.5,129.5 1421.0,133.1 1421.0,169.5 1412.5,167.3" fill="#2a2c30" stroke="#1a1a1a" stroke-width="0.5"/><polygon points="1413.7,147.6 1419.8,149.7 1419.8,167.6 1413.7,166.0" fill="#17181a"/><polygon points="1424.7,134.7 1432.0,137.8 1432.0,172.3 1424.7,170.4" fill="#2a2c30" stroke="#1a1a1a" stroke-width="0.5"/><polygon points="1425.9,151.9 1430.8,153.6 1430.8,170.5 1425.9,169.2" fill="#17181a"/><polygon points="1398.8,169.7 1403.4,170.8 1403.4,206.3 1398.8,205.9" fill="#2a2c30"/><polygon points="1398.8,212.7 1403.4,212.9 1403.4,248.9 1398.8,249.3" fill="#2a2c30"/><polygon points="1398.8,257.1 1403.4,256.5 1403.4,296.2 1398.8,297.6" fill="#2a2c30"/><polygon points="1412.5,172.9 1421.0,174.9 1421.0,207.8 1412.5,207.1" fill="#2a2c30"/><polygon points="1412.5,213.4 1421.0,213.9 1421.0,247.1 1412.5,248.0" fill="#2a2c30"/><polygon points="1412.5,255.3 1421.0,254.2 1421.0,290.9 1412.5,293.4" fill="#2a2c30"/><polygon points="1428.4,176.6 1432.0,177.5 1432.0,208.7 1428.4,208.4" fill="#2a2c30"/><polygon points="1424.4,214.1 1431.0,214.4 1431.0,246.1 1424.4,246.8" fill="#2a2c30"/><polygon points="1428.4,253.2 1432.0,252.7 1432.0,287.6 1428.4,288.7" fill="#2a2c30"/><polygon points="1413.6,222.7 1419.9,222.8 1419.9,243.8 1413.6,244.3" fill="#9c8882"/><polygon points="1425.6,222.9 1430.2,223.0 1430.2,243.0 1425.6,243.3" fill="#9c8882"/><polygon points="1437.7,124.4 1438.8,125.0 1438.8,285.5 1437.7,285.9" fill="#1a1a1a"/><polygon points="1357.4,141.5 1398.5,153.8 1398.5,297.7 1357.4,310.0" fill="#9d5e44" stroke="#1a1a1a" stroke-width="0.6"/><path d="M1357.4 166.0 L1398.5 174.7" stroke="#4a2618" stroke-width="0.7"/><polygon points="1393.7,102.2 1397.6,104.2 1397.6,175.2 1393.7,173.2" fill="#9b5b41" stroke="#1a1a1a" stroke-width="0.6"/><polygon points="1357.4,202.5 1520.0,215.9 1520.0,219.3 1357.4,210.4" fill="#9b9d9a" stroke="#55554f" stroke-width="0.5"/><polygon points="1357.4,253.4 1473.0,242.0 1473.0,247.3 1357.4,262.5" fill="#9b9d9a" stroke="#55554f" stroke-width="0.5"/><polygon points="1473.0,242.0 1520.0,237.3 1520.0,241.2 1473.0,247.3" fill="#9b9d9a" stroke="#55554f" stroke-width="0.5"/><polygon points="1379.0,249.2 1422.0,247.2 1422.0,255.5 1380.0,259.5" fill="#29292b" stroke="#1a1a1a" stroke-width="0.5"/><polygon points="1490.5,240.2 1509.0,238.8 1509.0,243.3 1490.5,244.8" fill="#29292b"/><path d="M1393.7 102.2 L1510.4 161.2 L1510.4 191.5 L1520 191.5" stroke="#1a1a1a" stroke-width="0.9" fill="none"/><polygon points="1357.4,310.0 1456.3,280.3 1456.3,309.4 1357.4,355.0" fill="#35373a" stroke="#1a1a1a" stroke-width="0.6"/><polygon points="1456.3,281.0 1473.4,276.0 1473.4,296.0 1456.3,300.0" fill="#252628"/><polygon points="1461.0,247.5 1473.4,246.3 1473.4,278.0 1461.0,279.0" fill="#2a2b2e"/><polygon points="1461.0,277.5 1473.4,276.5 1473.4,294.7 1461.0,295.7" fill="#9b9b99"/><polygon points="1473.4,270.0 1520.0,260.4 1520.0,280.0 1473.4,293.4" fill="#35373a" stroke="#1a1a1a" stroke-width="0.6"/><polygon points="1385.0,316.5 1399.0,295.0 1406.0,288.0 1419.0,287.5 1419.0,297.0 1404.0,318.0" fill="#505154"/><polygon points="1386.0,316.0 1399.0,296.0 1408.0,296.5 1402.0,317.5" fill="#6c6c6e"/><polygon points="1500.0,262.0 1507.0,259.0 1519.0,262.0 1519.0,266.0 1500.0,270.0" fill="#4a4b4e"/><polygon points="1053.0,182.6 1352.6,140.6 1352.6,310.0 1053.0,268.4" fill="#8c4c33"/><polygon points="1059.5,182.3 1061.0,182.1 1061.0,213.7 1059.5,213.7" fill="#2a2c30"/><polygon points="1059.5,194.8 1061.0,194.7 1061.0,213.4 1059.5,213.5" fill="#1d1e20"/><polygon points="1060.3,201.0 1060.2,201.0 1060.2,211.1 1060.3,211.1" fill="#7f6e6a"/><polygon points="1059.5,217.8 1061.0,217.8 1061.0,240.1 1059.5,240.0" fill="#2a2c30"/><polygon points="1059.5,221.5 1061.0,221.4 1061.0,239.9 1059.5,239.8" fill="#1d1e20"/><polygon points="1060.3,227.2 1060.2,227.2 1060.2,237.5 1060.3,237.5" fill="#7f6e6a"/><polygon points="1059.5,244.7 1061.0,244.8 1061.0,269.5 1059.5,269.3" fill="#2a2c30"/><polygon points="1059.5,247.6 1061.0,247.7 1061.0,268.4 1059.5,268.2" fill="#1d1e20"/><polygon points="1060.3,253.8 1060.2,253.8 1060.2,267.0 1060.3,267.0" fill="#7f6e6a"/><polygon points="1065.4,181.5 1069.1,181.0 1069.1,213.3 1065.4,213.5" fill="#2a2c30"/><polygon points="1065.4,194.3 1069.1,193.9 1069.1,213.1 1065.4,213.2" fill="#1d1e20"/><polygon points="1066.7,195.2 1067.8,195.1 1067.8,198.3 1066.7,198.4" fill="#7c8185"/><polygon points="1066.7,200.5 1067.8,200.4 1067.8,210.7 1066.7,210.8" fill="#7f6e6a"/><polygon points="1065.4,217.6 1069.1,217.6 1069.1,240.5 1065.4,240.3" fill="#2a2c30"/><polygon points="1065.4,221.4 1069.1,221.3 1069.1,240.2 1065.4,240.1" fill="#1d1e20"/><polygon points="1066.7,222.2 1067.8,222.1 1067.8,225.6 1066.7,225.6" fill="#7c8185"/><polygon points="1066.7,227.2 1067.8,227.2 1067.8,237.8 1066.7,237.8" fill="#7f6e6a"/><polygon points="1065.4,245.1 1069.1,245.3 1069.1,270.6 1065.4,270.1" fill="#2a2c30"/><polygon points="1065.4,248.0 1069.1,248.2 1069.1,269.5 1065.4,269.0" fill="#1d1e20"/><polygon points="1066.7,249.1 1067.8,249.2 1067.8,252.4 1066.7,252.3" fill="#7c8185"/><polygon points="1066.7,254.4 1067.8,254.5 1067.8,268.0 1066.7,267.9" fill="#7f6e6a"/><polygon points="1074.0,180.3 1075.5,180.1 1075.5,213.1 1074.0,213.2" fill="#2a2c30"/><polygon points="1074.0,193.4 1075.5,193.3 1075.5,212.8 1074.0,212.9" fill="#1d1e20"/><polygon points="1074.8,199.8 1074.7,199.9 1074.7,210.4 1074.8,210.4" fill="#7f6e6a"/><polygon points="1074.0,217.4 1075.5,217.4 1075.5,240.7 1074.0,240.7" fill="#2a2c30"/><polygon points="1074.0,221.3 1075.5,221.2 1075.5,240.5 1074.0,240.5" fill="#1d1e20"/><polygon points="1074.8,227.2 1074.7,227.2 1074.7,238.1 1074.8,238.1" fill="#7f6e6a"/><polygon points="1074.0,245.6 1075.5,245.7 1075.5,271.5 1074.0,271.3" fill="#2a2c30"/><polygon points="1074.0,248.6 1075.5,248.7 1075.5,270.4 1074.0,270.2" fill="#1d1e20"/><polygon points="1074.8,255.1 1074.7,255.1 1074.7,268.9 1074.8,269.0" fill="#7f6e6a"/><polygon points="1079.9,179.5 1084.6,178.9 1084.6,212.7 1079.9,212.9" fill="#2a2c30"/><polygon points="1079.9,192.8 1084.6,192.4 1084.6,212.5 1079.9,212.7" fill="#1d1e20"/><polygon points="1081.2,193.8 1083.3,193.6 1083.3,197.0 1081.2,197.1" fill="#7c8185"/><polygon points="1081.2,199.3 1083.3,199.2 1083.3,210.0 1081.2,210.1" fill="#7f6e6a"/><polygon points="1079.9,217.3 1084.6,217.2 1084.6,241.2 1079.9,240.9" fill="#2a2c30"/><polygon points="1079.9,221.2 1084.6,221.1 1084.6,240.9 1079.9,240.7" fill="#1d1e20"/><polygon points="1081.2,222.0 1083.3,222.0 1083.3,225.6 1081.2,225.6" fill="#7c8185"/><polygon points="1081.2,227.2 1083.3,227.3 1083.3,238.4 1081.2,238.3" fill="#7f6e6a"/><polygon points="1079.9,246.0 1084.6,246.2 1084.6,272.8 1079.9,272.1" fill="#2a2c30"/><polygon points="1079.9,249.0 1084.6,249.3 1084.6,271.6 1079.9,271.0" fill="#1d1e20"/><polygon points="1081.2,250.2 1083.3,250.3 1083.3,253.7 1081.2,253.5" fill="#7c8185"/><polygon points="1081.2,255.7 1083.3,255.9 1083.3,270.1 1081.2,269.8" fill="#7f6e6a"/><polygon points="1091.0,178.0 1093.0,177.7 1093.0,212.4 1091.0,212.5" fill="#2a2c30"/><polygon points="1091.0,191.7 1093.0,191.5 1093.0,212.1 1091.0,212.2" fill="#1d1e20"/><polygon points="1091.8,198.5 1092.2,198.5 1092.2,209.6 1091.8,209.6" fill="#7f6e6a"/><polygon points="1091.0,217.0 1093.0,216.9 1093.0,241.5 1091.0,241.5" fill="#2a2c30"/><polygon points="1091.0,221.0 1093.0,221.0 1093.0,241.3 1091.0,241.2" fill="#1d1e20"/><polygon points="1091.8,227.3 1092.2,227.3 1092.2,238.7 1091.8,238.7" fill="#7f6e6a"/><polygon points="1091.0,246.6 1093.0,246.8 1093.0,273.9 1091.0,273.6" fill="#2a2c30"/><polygon points="1091.0,249.8 1093.0,249.9 1093.0,272.8 1091.0,272.5" fill="#1d1e20"/><polygon points="1091.8,256.7 1092.2,256.7 1092.2,271.2 1091.8,271.2" fill="#7f6e6a"/><polygon points="1097.0,177.2 1099.5,176.8 1099.5,212.2 1097.0,212.3" fill="#2a2c30"/><polygon points="1097.0,191.2 1099.5,190.9 1099.5,211.9 1097.0,212.0" fill="#1d1e20"/><polygon points="1097.8,198.0 1098.7,198.0 1098.7,209.3 1097.8,209.3" fill="#7f6e6a"/><polygon points="1097.0,216.8 1099.5,216.8 1099.5,241.8 1097.0,241.7" fill="#2a2c30"/><polygon points="1097.0,221.0 1099.5,220.9 1099.5,241.6 1097.0,241.5" fill="#1d1e20"/><polygon points="1097.8,227.3 1098.7,227.3 1098.7,239.0 1097.8,238.9" fill="#7f6e6a"/><polygon points="1097.0,247.0 1099.5,247.1 1099.5,274.8 1097.0,274.5" fill="#2a2c30"/><polygon points="1097.0,250.2 1099.5,250.4 1099.5,273.7 1097.0,273.3" fill="#1d1e20"/><polygon points="1097.8,257.2 1098.7,257.3 1098.7,272.1 1097.8,272.0" fill="#7f6e6a"/><polygon points="1104.4,176.1 1110.1,175.3 1110.1,211.8 1104.4,212.0" fill="#2a2c30"/><polygon points="1104.4,190.4 1110.1,189.9 1110.1,211.5 1104.4,211.7" fill="#1d1e20"/><polygon points="1105.7,191.5 1108.8,191.2 1108.8,194.8 1105.7,195.0" fill="#7c8185"/><polygon points="1105.7,197.4 1108.8,197.2 1108.8,208.8 1105.7,209.0" fill="#7f6e6a"/><polygon points="1104.4,216.7 1110.1,216.5 1110.1,242.3 1104.4,242.1" fill="#2a2c30"/><polygon points="1104.4,220.9 1110.1,220.8 1110.1,242.1 1104.4,241.8" fill="#1d1e20"/><polygon points="1105.7,221.7 1108.8,221.7 1108.8,225.6 1105.7,225.6" fill="#7c8185"/><polygon points="1105.7,227.4 1108.8,227.4 1108.8,239.3 1105.7,239.2" fill="#7f6e6a"/><polygon points="1104.4,247.4 1110.1,247.8 1110.1,276.3 1104.4,275.5" fill="#2a2c30"/><polygon points="1104.4,250.7 1110.1,251.1 1110.1,275.1 1104.4,274.3" fill="#1d1e20"/><polygon points="1105.7,252.0 1108.8,252.2 1108.8,255.8 1105.7,255.5" fill="#7c8185"/><polygon points="1105.7,257.9 1108.8,258.2 1108.8,273.4 1105.7,273.0" fill="#7f6e6a"/><polygon points="1119.9,174.0 1125.6,173.2 1125.6,211.2 1119.9,211.4" fill="#2a2c30"/><polygon points="1119.9,188.9 1125.6,188.3 1125.6,210.9 1119.9,211.1" fill="#1d1e20"/><polygon points="1121.2,190.0 1124.3,189.7 1124.3,193.5 1121.2,193.7" fill="#7c8185"/><polygon points="1121.2,196.2 1124.3,196.0 1124.3,208.1 1121.2,208.3" fill="#7f6e6a"/><polygon points="1119.9,216.3 1125.6,216.1 1125.6,243.0 1119.9,242.8" fill="#2a2c30"/><polygon points="1119.9,220.6 1125.6,220.6 1125.6,242.8 1119.9,242.5" fill="#1d1e20"/><polygon points="1121.2,221.6 1124.3,221.5 1124.3,225.6 1121.2,225.6" fill="#7c8185"/><polygon points="1121.2,227.4 1124.3,227.4 1124.3,239.9 1121.2,239.8" fill="#7f6e6a"/><polygon points="1119.9,248.4 1125.6,248.7 1125.6,278.5 1119.9,277.7" fill="#2a2c30"/><polygon points="1119.9,251.8 1125.6,252.2 1125.6,277.2 1119.9,276.4" fill="#1d1e20"/><polygon points="1121.2,253.1 1124.3,253.3 1124.3,257.1 1121.2,256.8" fill="#7c8185"/><polygon points="1121.2,259.3 1124.3,259.6 1124.3,275.5 1121.2,275.1" fill="#7f6e6a"/><polygon points="1132.4,172.3 1138.6,171.4 1138.6,210.7 1132.4,210.9" fill="#2a2c30"/><polygon points="1132.4,187.7 1138.6,187.1 1138.6,210.4 1132.4,210.6" fill="#1d1e20"/><polygon points="1133.7,188.8 1137.3,188.5 1137.3,192.3 1133.7,192.7" fill="#7c8185"/><polygon points="1133.7,195.2 1134.8,195.1 1134.8,207.6 1133.7,207.7" fill="#8c7a75"/><polygon points="1136.2,195.0 1137.3,194.9 1137.3,207.5 1136.2,207.6" fill="#8c7a75"/><polygon points="1132.4,216.0 1138.6,215.8 1138.6,243.6 1132.4,243.3" fill="#2a2c30"/><polygon points="1132.4,220.5 1138.6,220.4 1138.6,243.4 1132.4,243.1" fill="#1d1e20"/><polygon points="1133.7,221.4 1137.3,221.4 1137.3,225.6 1133.7,225.6" fill="#7c8185"/><polygon points="1133.7,227.5 1134.8,227.5 1134.8,240.3 1133.7,240.3" fill="#8c7a75"/><polygon points="1136.2,227.5 1137.3,227.5 1137.3,240.4 1136.2,240.4" fill="#8c7a75"/><polygon points="1132.4,249.1 1138.6,249.5 1138.6,280.3 1132.4,279.4" fill="#2a2c30"/><polygon points="1132.4,252.6 1138.6,253.1 1138.6,279.0 1132.4,278.1" fill="#1d1e20"/><polygon points="1133.7,254.0 1137.3,254.3 1137.3,258.1 1133.7,257.8" fill="#7c8185"/><polygon points="1133.7,260.4 1134.8,260.5 1134.8,276.8 1133.7,276.7" fill="#8c7a75"/><polygon points="1136.2,260.6 1137.3,260.7 1137.3,277.2 1136.2,277.0" fill="#8c7a75"/><polygon points="1145.4,170.5 1152.6,169.5 1152.6,210.1 1145.4,210.4" fill="#2a2c30"/><polygon points="1145.4,186.4 1152.6,185.7 1152.6,209.8 1145.4,210.1" fill="#1d1e20"/><polygon points="1146.7,187.6 1151.3,187.1 1151.3,191.2 1146.7,191.5" fill="#7c8185"/><polygon points="1146.7,194.2 1148.2,194.1 1148.2,207.0 1146.7,207.1" fill="#8c7a75"/><polygon points="1149.8,194.0 1151.3,193.8 1151.3,206.9 1149.8,206.9" fill="#8c7a75"/><polygon points="1145.4,215.6 1152.6,215.4 1152.6,244.3 1145.4,243.9" fill="#2a2c30"/><polygon points="1145.4,220.3 1152.6,220.2 1152.6,244.0 1145.4,243.7" fill="#1d1e20"/><polygon points="1146.7,221.3 1151.3,221.2 1151.3,225.6 1146.7,225.6" fill="#7c8185"/><polygon points="1146.7,227.5 1148.2,227.6 1148.2,240.8 1146.7,240.8" fill="#8c7a75"/><polygon points="1149.8,227.6 1151.3,227.6 1151.3,240.9 1149.8,240.9" fill="#8c7a75"/><polygon points="1145.4,249.9 1152.6,250.4 1152.6,282.2 1145.4,281.2" fill="#2a2c30"/><polygon points="1145.4,253.6 1152.6,254.1 1152.6,280.9 1145.4,279.9" fill="#1d1e20"/><polygon points="1146.7,255.0 1151.3,255.3 1151.3,259.3 1146.7,258.9" fill="#7c8185"/><polygon points="1146.7,261.6 1148.2,261.7 1148.2,278.6 1146.7,278.4" fill="#8c7a75"/><polygon points="1149.8,261.8 1151.3,262.0 1151.3,279.0 1149.8,278.8" fill="#8c7a75"/><polygon points="1159.4,168.5 1166.6,167.5 1166.6,209.6 1159.4,209.9" fill="#2a2c30"/><polygon points="1159.4,185.0 1166.6,184.3 1166.6,209.3 1159.4,209.5" fill="#1d1e20"/><polygon points="1160.7,186.3 1165.3,185.8 1165.3,190.0 1160.7,190.4" fill="#7c8185"/><polygon points="1160.7,193.1 1162.2,193.0 1162.2,206.3 1160.7,206.4" fill="#8c7a75"/><polygon points="1163.8,192.9 1165.3,192.7 1165.3,206.2 1163.8,206.3" fill="#8c7a75"/><polygon points="1159.4,215.3 1166.6,215.1 1166.6,244.9 1159.4,244.6" fill="#2a2c30"/><polygon points="1159.4,220.1 1166.6,220.0 1166.6,244.6 1159.4,244.3" fill="#1d1e20"/><polygon points="1160.7,221.1 1165.3,221.1 1165.3,225.6 1160.7,225.6" fill="#7c8185"/><polygon points="1160.7,227.6 1162.2,227.6 1162.2,241.3 1160.7,241.3" fill="#8c7a75"/><polygon points="1163.8,227.6 1165.3,227.6 1165.3,241.5 1163.8,241.4" fill="#8c7a75"/><polygon points="1159.4,250.8 1166.6,251.2 1166.6,284.2 1159.4,283.2" fill="#2a2c30"/><polygon points="1159.4,254.5 1166.6,255.0 1166.6,282.8 1159.4,281.8" fill="#1d1e20"/><polygon points="1160.7,256.0 1165.3,256.3 1165.3,260.5 1160.7,260.1" fill="#7c8185"/><polygon points="1160.7,262.8 1162.2,263.0 1162.2,280.5 1160.7,280.3" fill="#8c7a75"/><polygon points="1163.8,263.1 1165.3,263.2 1165.3,280.9 1163.8,280.7" fill="#8c7a75"/><polygon points="1172.9,166.7 1177.1,166.1 1177.1,209.2 1172.9,209.4" fill="#2a2c30"/><polygon points="1172.9,183.7 1177.1,183.3 1177.1,208.9 1172.9,209.0" fill="#1d1e20"/><polygon points="1174.2,185.0 1175.8,184.8 1175.8,189.1 1174.2,189.2" fill="#7c8185"/><polygon points="1174.2,192.0 1175.8,191.9 1175.8,205.7 1174.2,205.8" fill="#7f6e6a"/><polygon points="1172.9,214.9 1177.1,214.8 1177.1,245.4 1172.9,245.2" fill="#2a2c30"/><polygon points="1172.9,219.9 1177.1,219.9 1177.1,245.1 1172.9,244.9" fill="#1d1e20"/><polygon points="1174.2,221.0 1175.8,221.0 1175.8,225.6 1174.2,225.6" fill="#7c8185"/><polygon points="1174.2,227.7 1175.8,227.7 1175.8,241.9 1174.2,241.8" fill="#7f6e6a"/><polygon points="1172.9,251.6 1177.1,251.9 1177.1,285.6 1172.9,285.0" fill="#2a2c30"/><polygon points="1172.9,255.5 1177.1,255.8 1177.1,284.2 1172.9,283.6" fill="#1d1e20"/><polygon points="1174.2,257.0 1175.8,257.1 1175.8,261.3 1174.2,261.2" fill="#7c8185"/><polygon points="1174.2,264.0 1175.8,264.2 1175.8,282.2 1174.2,282.0" fill="#7f6e6a"/><polygon points="1186.9,164.7 1199.6,163.0 1199.6,208.4 1186.9,208.8" fill="#2a2c30"/><polygon points="1186.9,182.3 1199.6,181.1 1199.6,208.0 1186.9,208.5" fill="#1d1e20"/><polygon points="1188.9,183.6 1197.6,182.7 1197.6,187.2 1188.9,188.0" fill="#7c8185"/><polygon points="1188.9,190.9 1191.8,190.6 1191.8,205.0 1188.9,205.1" fill="#9c8882"/><polygon points="1194.8,190.4 1197.6,190.2 1197.6,204.7 1194.8,204.8" fill="#9c8882"/><polygon points="1186.9,214.6 1199.6,214.3 1199.6,246.4 1186.9,245.8" fill="#2a2c30"/><polygon points="1186.9,219.7 1199.6,219.6 1199.6,246.1 1186.9,245.5" fill="#1d1e20"/><polygon points="1188.9,220.8 1197.6,220.7 1197.6,225.6 1188.9,225.6" fill="#7c8185"/><polygon points="1188.9,227.7 1191.8,227.8 1191.8,242.5 1188.9,242.3" fill="#9c8882"/><polygon points="1194.8,227.8 1197.6,227.8 1197.6,242.7 1194.8,242.6" fill="#9c8882"/><polygon points="1186.9,252.4 1199.6,253.2 1199.6,288.7 1186.9,287.0" fill="#2a2c30"/><polygon points="1186.9,256.4 1199.6,257.3 1199.6,287.2 1186.9,285.5" fill="#1d1e20"/><polygon points="1188.9,258.0 1197.6,258.7 1197.6,263.1 1188.9,262.4" fill="#7c8185"/><polygon points="1188.9,265.3 1191.8,265.6 1191.8,284.3 1188.9,284.0" fill="#9c8882"/><polygon points="1194.8,265.9 1197.6,266.1 1197.6,285.1 1194.8,284.7" fill="#9c8882"/><polygon points="1206.4,162.0 1217.6,160.5 1217.6,207.7 1206.4,208.1" fill="#2a2c30"/><polygon points="1206.4,180.4 1217.6,179.3 1217.6,207.3 1206.4,207.7" fill="#1d1e20"/><polygon points="1208.4,181.7 1215.6,181.0 1215.6,185.7 1208.4,186.3" fill="#7c8185"/><polygon points="1208.4,189.3 1210.5,189.2 1210.5,204.1 1208.4,204.2" fill="#9c8882"/><polygon points="1213.5,188.9 1215.6,188.8 1215.6,203.9 1213.5,204.0" fill="#9c8882"/><polygon points="1206.4,214.1 1217.6,213.8 1217.6,247.2 1206.4,246.7" fill="#2a2c30"/><polygon points="1206.4,219.5 1217.6,219.3 1217.6,246.9 1206.4,246.4" fill="#1d1e20"/><polygon points="1208.4,220.6 1215.6,220.5 1215.6,225.5 1208.4,225.5" fill="#7c8185"/><polygon points="1208.4,227.8 1210.5,227.8 1210.5,243.2 1208.4,243.1" fill="#9c8882"/><polygon points="1213.5,227.9 1215.6,227.9 1215.6,243.4 1213.5,243.3" fill="#9c8882"/><polygon points="1206.4,253.6 1217.6,254.3 1217.6,291.2 1206.4,289.7" fill="#2a2c30"/><polygon points="1206.4,257.8 1217.6,258.6 1217.6,289.7 1206.4,288.2" fill="#1d1e20"/><polygon points="1208.4,259.5 1215.6,260.0 1215.6,264.6 1208.4,264.0" fill="#7c8185"/><polygon points="1208.4,267.1 1210.5,267.3 1210.5,286.8 1208.4,286.5" fill="#9c8882"/><polygon points="1213.5,267.5 1215.6,267.7 1215.6,287.5 1213.5,287.2" fill="#9c8882"/><polygon points="1225.9,159.3 1237.6,157.7 1237.6,206.9 1225.9,207.3" fill="#2a2c30"/><polygon points="1225.9,178.5 1237.6,177.3 1237.6,206.5 1225.9,207.0" fill="#1d1e20"/><polygon points="1227.9,179.9 1235.6,179.1 1235.6,184.0 1227.9,184.6" fill="#7c8185"/><polygon points="1227.9,187.8 1230.2,187.6 1230.2,203.2 1227.9,203.3" fill="#9c8882"/><polygon points="1233.2,187.4 1235.6,187.2 1235.6,202.9 1233.2,203.0" fill="#9c8882"/><polygon points="1225.9,213.6 1237.6,213.3 1237.6,248.1 1225.9,247.6" fill="#2a2c30"/><polygon points="1225.9,219.2 1237.6,219.1 1237.6,247.8 1225.9,247.3" fill="#1d1e20"/><polygon points="1227.9,220.4 1235.6,220.3 1235.6,225.5 1227.9,225.5" fill="#7c8185"/><polygon points="1227.9,227.9 1230.2,227.9 1230.2,243.9 1227.9,243.8" fill="#9c8882"/><polygon points="1233.2,227.9 1235.6,228.0 1235.6,244.1 1233.2,244.0" fill="#9c8882"/><polygon points="1225.9,254.8 1237.6,255.5 1237.6,294.0 1225.9,292.4" fill="#2a2c30"/><polygon points="1225.9,259.2 1237.6,260.0 1237.6,292.4 1225.9,290.8" fill="#1d1e20"/><polygon points="1227.9,260.9 1235.6,261.5 1235.6,266.3 1227.9,265.7" fill="#7c8185"/><polygon points="1227.9,268.8 1230.2,269.0 1230.2,289.4 1227.9,289.1" fill="#9c8882"/><polygon points="1233.2,269.3 1235.6,269.5 1235.6,290.1 1233.2,289.8" fill="#9c8882"/><polygon points="1245.9,156.6 1251.1,155.8 1251.1,206.4 1245.9,206.6" fill="#2a2c30"/><polygon points="1245.9,176.5 1251.1,176.0 1251.1,206.0 1245.9,206.2" fill="#1d1e20"/><polygon points="1247.2,178.0 1249.8,177.8 1249.8,182.8 1247.2,183.0" fill="#7c8185"/><polygon points="1247.2,186.3 1249.8,186.1 1249.8,202.3 1247.2,202.4" fill="#7f6e6a"/><polygon points="1245.9,213.1 1251.1,213.0 1251.1,248.8 1245.9,248.5" fill="#2a2c30"/><polygon points="1245.9,218.9 1251.1,218.9 1251.1,248.4 1245.9,248.2" fill="#1d1e20"/><polygon points="1247.2,220.2 1249.8,220.1 1249.8,225.5 1247.2,225.5" fill="#7c8185"/><polygon points="1247.2,228.0 1249.8,228.0 1249.8,244.6 1247.2,244.5" fill="#7f6e6a"/><polygon points="1245.9,256.0 1251.1,256.3 1251.1,295.9 1245.9,295.2" fill="#2a2c30"/><polygon points="1245.9,260.6 1251.1,260.9 1251.1,294.2 1245.9,293.5" fill="#1d1e20"/><polygon points="1247.2,262.3 1249.8,262.5 1249.8,267.5 1247.2,267.3" fill="#7c8185"/><polygon points="1247.2,270.6 1249.8,270.8 1249.8,292.0 1247.2,291.6" fill="#7f6e6a"/><polygon points="1260.4,154.6 1274.1,152.7 1274.1,205.5 1260.4,206.0" fill="#2a2c30"/><polygon points="1260.4,175.1 1274.1,173.7 1274.1,205.1 1260.4,205.6" fill="#1d1e20"/><polygon points="1262.4,176.6 1272.1,175.7 1272.1,180.9 1262.4,181.7" fill="#7c8185"/><polygon points="1262.4,185.1 1265.8,184.8 1265.8,201.5 1262.4,201.7" fill="#9c8882"/><polygon points="1268.8,184.6 1272.1,184.3 1272.1,201.2 1268.8,201.4" fill="#9c8882"/><polygon points="1260.4,212.7 1274.1,212.4 1274.1,249.8 1260.4,249.2" fill="#2a2c30"/><polygon points="1260.4,218.7 1274.1,218.6 1274.1,249.5 1260.4,248.9" fill="#1d1e20"/><polygon points="1262.4,220.0 1272.1,219.9 1272.1,225.5 1262.4,225.5" fill="#7c8185"/><polygon points="1262.4,228.1 1265.8,228.1 1265.8,245.2 1262.4,245.1" fill="#9c8882"/><polygon points="1268.8,228.1 1272.1,228.1 1272.1,245.5 1268.8,245.3" fill="#9c8882"/><polygon points="1260.4,256.9 1274.1,257.7 1274.1,299.1 1260.4,297.2" fill="#2a2c30"/><polygon points="1260.4,261.6 1274.1,262.5 1274.1,297.3 1260.4,295.5" fill="#1d1e20"/><polygon points="1262.4,263.4 1272.1,264.1 1272.1,269.3 1262.4,268.5" fill="#7c8185"/><polygon points="1262.4,271.9 1265.8,272.2 1265.8,294.1 1262.4,293.6" fill="#9c8882"/><polygon points="1268.8,272.5 1272.1,272.8 1272.1,294.9 1268.8,294.5" fill="#9c8882"/><polygon points="1297.4,149.4 1312.6,147.3 1312.6,204.0 1297.4,204.6" fill="#2a2c30"/><polygon points="1297.4,171.4 1312.6,169.9 1312.6,203.6 1297.4,204.2" fill="#1d1e20"/><polygon points="1299.4,173.1 1310.6,172.0 1310.6,177.6 1299.4,178.5" fill="#7c8185"/><polygon points="1299.4,182.2 1303.5,181.9 1303.5,199.8 1299.4,200.0" fill="#9c8882"/><polygon points="1306.5,181.6 1310.6,181.3 1310.6,199.5 1306.5,199.6" fill="#9c8882"/><polygon points="1297.4,211.8 1312.6,211.4 1312.6,251.6 1297.4,250.9" fill="#2a2c30"/><polygon points="1297.4,218.2 1312.6,218.0 1312.6,251.2 1297.4,250.5" fill="#1d1e20"/><polygon points="1299.4,219.6 1310.6,219.5 1310.6,225.5 1299.4,225.5" fill="#7c8185"/><polygon points="1299.4,228.3 1303.5,228.3 1303.5,246.7 1299.4,246.5" fill="#9c8882"/><polygon points="1306.5,228.3 1310.6,228.3 1310.6,246.9 1306.5,246.8" fill="#9c8882"/><polygon points="1297.4,259.2 1312.6,260.1 1312.6,304.4 1297.4,302.3" fill="#2a2c30"/><polygon points="1297.4,264.2 1312.6,265.2 1312.6,302.6 1297.4,300.5" fill="#1d1e20"/><polygon points="1299.4,266.1 1310.6,266.9 1310.6,272.5 1299.4,271.6" fill="#7c8185"/><polygon points="1299.4,275.2 1303.5,275.6 1303.5,299.0 1299.4,298.5" fill="#9c8882"/><polygon points="1306.5,275.9 1310.6,276.2 1310.6,300.0 1306.5,299.4" fill="#9c8882"/><polygon points="1323.4,145.8 1331.1,144.8 1331.1,203.3 1323.4,203.6" fill="#2a2c30"/><polygon points="1323.4,168.9 1331.1,168.1 1331.1,202.8 1323.4,203.1" fill="#1d1e20"/><polygon points="1324.7,170.7 1329.8,170.2 1329.8,175.9 1324.7,176.4" fill="#7c8185"/><polygon points="1324.7,180.2 1326.5,180.1 1326.5,198.7 1324.7,198.8" fill="#8c7a75"/><polygon points="1328.0,179.9 1329.8,179.8 1329.8,198.6 1328.0,198.6" fill="#8c7a75"/><polygon points="1323.4,211.1 1331.1,210.9 1331.1,252.4 1323.4,252.1" fill="#2a2c30"/><polygon points="1323.4,217.9 1331.1,217.8 1331.1,252.0 1323.4,251.7" fill="#1d1e20"/><polygon points="1324.7,219.3 1329.8,219.3 1329.8,225.5 1324.7,225.5" fill="#7c8185"/><polygon points="1324.7,228.4 1326.5,228.4 1326.5,247.5 1324.7,247.5" fill="#8c7a75"/><polygon points="1328.0,228.4 1329.8,228.4 1329.8,247.6 1328.0,247.6" fill="#8c7a75"/><polygon points="1323.4,260.7 1331.1,261.2 1331.1,307.0 1323.4,305.9" fill="#2a2c30"/><polygon points="1323.4,266.0 1331.1,266.5 1331.1,305.1 1323.4,304.0" fill="#1d1e20"/><polygon points="1324.7,268.0 1329.8,268.3 1329.8,274.1 1324.7,273.7" fill="#7c8185"/><polygon points="1324.7,277.5 1326.5,277.7 1326.5,302.1 1324.7,301.8" fill="#8c7a75"/><polygon points="1328.0,277.8 1329.8,278.0 1329.8,302.5 1328.0,302.3" fill="#8c7a75"/><polygon points="1053.3,182.6 1059.0,181.8 1059.0,269.2 1053.3,268.4" fill="#9c583d"/><path d="M1053.3 182.6 L1053.3 268.4 M1059.0 181.8 L1059.0 269.2" stroke="#4a2618" stroke-width="0.6" fill="none"/><polygon points="1061.5,181.4 1064.5,181.0 1064.5,270.0 1061.5,269.5" fill="#9c583d"/><path d="M1061.5 181.4 L1061.5 269.5 M1064.5 181.0 L1064.5 270.0" stroke="#4a2618" stroke-width="0.6" fill="none"/><polygon points="1070.0,180.2 1073.5,179.8 1073.5,271.2 1070.0,270.7" fill="#9c583d"/><path d="M1070.0 180.2 L1070.0 270.7 M1073.5 179.8 L1073.5 271.2" stroke="#4a2618" stroke-width="0.6" fill="none"/><polygon points="1076.0,179.4 1079.0,179.0 1079.0,272.0 1076.0,271.6" fill="#9c583d"/><path d="M1076.0 179.4 L1076.0 271.6 M1079.0 179.0 L1079.0 272.0" stroke="#4a2618" stroke-width="0.6" fill="none"/><polygon points="1085.5,178.1 1090.5,177.4 1090.5,273.6 1085.5,272.9" fill="#9c583d"/><path d="M1085.5 178.1 L1085.5 272.9 M1090.5 177.4 L1090.5 273.6" stroke="#4a2618" stroke-width="0.6" fill="none"/><polygon points="1093.5,176.9 1096.5,176.5 1096.5,274.4 1093.5,274.0" fill="#9c583d"/><path d="M1093.5 176.9 L1093.5 274.0 M1096.5 176.5 L1096.5 274.4" stroke="#4a2618" stroke-width="0.6" fill="none"/><polygon points="1100.0,176.0 1103.0,175.6 1103.0,275.3 1100.0,274.9" fill="#9c583d"/><path d="M1100.0 176.0 L1100.0 274.9 M1103.0 175.6 L1103.0 275.3" stroke="#4a2618" stroke-width="0.6" fill="none"/><polygon points="1111.5,174.4 1118.5,173.4 1118.5,277.5 1111.5,276.5" fill="#9c583d"/><path d="M1111.5 174.4 L1111.5 276.5 M1118.5 173.4 L1118.5 277.5" stroke="#4a2618" stroke-width="0.6" fill="none"/><polygon points="1127.0,172.2 1131.0,171.7 1131.0,279.2 1127.0,278.6" fill="#9c583d"/><path d="M1127.0 172.2 L1127.0 278.6 M1131.0 171.7 L1131.0 279.2" stroke="#4a2618" stroke-width="0.6" fill="none"/><polygon points="1140.0,170.4 1144.0,169.9 1144.0,281.0 1140.0,280.5" fill="#9c583d"/><path d="M1140.0 170.4 L1140.0 280.5 M1144.0 169.9 L1144.0 281.0" stroke="#4a2618" stroke-width="0.6" fill="none"/><polygon points="1154.0,168.5 1158.0,167.9 1158.0,283.0 1154.0,282.4" fill="#9c583d"/><path d="M1154.0 168.5 L1154.0 282.4 M1158.0 167.9 L1158.0 283.0" stroke="#4a2618" stroke-width="0.6" fill="none"/><polygon points="1168.0,166.5 1172.0,165.9 1172.0,284.9 1168.0,284.3" fill="#9c583d"/><path d="M1168.0 166.5 L1168.0 284.3 M1172.0 165.9 L1172.0 284.9" stroke="#4a2618" stroke-width="0.6" fill="none"/><polygon points="1178.0,165.1 1185.5,164.0 1185.5,286.8 1178.0,285.7" fill="#9c583d"/><path d="M1178.0 165.1 L1178.0 285.7 M1185.5 164.0 L1185.5 286.8" stroke="#4a2618" stroke-width="0.6" fill="none"/><polygon points="1201.0,161.9 1205.0,161.3 1205.0,289.5 1201.0,288.9" fill="#9c583d"/><path d="M1201.0 161.9 L1201.0 288.9 M1205.0 161.3 L1205.0 289.5" stroke="#4a2618" stroke-width="0.6" fill="none"/><polygon points="1219.0,159.3 1224.5,158.6 1224.5,292.2 1219.0,291.4" fill="#9c583d"/><path d="M1219.0 159.3 L1219.0 291.4 M1224.5 158.6 L1224.5 292.2" stroke="#4a2618" stroke-width="0.6" fill="none"/><polygon points="1239.0,156.5 1245.0,155.7 1245.0,295.0 1239.0,294.2" fill="#9c583d"/><path d="M1239.0 156.5 L1239.0 294.2 M1245.0 155.7 L1245.0 295.0" stroke="#4a2618" stroke-width="0.6" fill="none"/><polygon points="1252.0,154.7 1259.0,153.7 1259.0,297.0 1252.0,296.0" fill="#9c583d"/><path d="M1252.0 154.7 L1252.0 296.0 M1259.0 153.7 L1259.0 297.0" stroke="#4a2618" stroke-width="0.6" fill="none"/><polygon points="1275.5,151.4 1296.0,148.5 1296.0,302.1 1275.5,299.3" fill="#9c583d"/><path d="M1275.5 151.4 L1275.5 299.3 M1296.0 148.5 L1296.0 302.1" stroke="#4a2618" stroke-width="0.6" fill="none"/><polygon points="1314.0,146.0 1322.0,144.9 1322.0,305.7 1314.0,304.6" fill="#9c583d"/><path d="M1314.0 146.0 L1314.0 304.6 M1322.0 144.9 L1322.0 305.7" stroke="#4a2618" stroke-width="0.6" fill="none"/><polygon points="1332.5,143.4 1352.6,140.6 1352.6,310.0 1332.5,307.2" fill="#9c583d"/><path d="M1332.5 143.4 L1332.5 307.2 M1352.6 140.6 L1352.6 310.0" stroke="#4a2618" stroke-width="0.6" fill="none"/><path d="M1275.5 173.2 L1296 171.1" stroke="#4a2618" stroke-width="0.7"/><path d="M1332.5 167.5 L1352.6 165.5" stroke="#4a2618" stroke-width="0.7"/><path d="M1178 182.8 L1185.5 182.1" stroke="#4a2618" stroke-width="0.7"/><path d="M1111.5 189.4 L1118.5 188.7" stroke="#4a2618" stroke-width="0.7"/><polygon points="1259.5,256.9 1275.0,257.8 1275.0,299.2 1259.5,297.1" fill="#2a2c30"/><polygon points="1053.0,214.0 1352.6,202.5 1352.6,210.4 1053.0,218.0" fill="#adafaa" stroke="#55554f" stroke-width="0.5"/><polygon points="1053.0,239.7 1352.6,253.4 1352.6,262.5 1053.0,244.3" fill="#adafaa" stroke="#55554f" stroke-width="0.5"/><polygon points="1078.0,240.0 1097.0,240.9 1097.0,248.4 1078.0,247.2" fill="#2b2b2d"/><path d="M1053 182.6 L1352.6 140.6" stroke="#1a1a1a" stroke-width="0.9"/><polygon points="1053.0,268.4 1352.6,310.0 1352.6,355.0 1053.0,291.1" fill="#2d2e30" stroke="#1a1a1a" stroke-width="0.6"/><polygon points="1053.0,268.4 1352.6,310.0 1352.6,316.0 1053.0,271.4" fill="#38393b"/><polygon points="1063.0,270.5 1068.0,265.0 1076.0,262.5 1085.0,263.0 1085.0,268.5 1074.0,272.5" fill="#4b4b4d"/><circle cx="1218" cy="301.5" r="1.9" fill="#161617"/><circle cx="1237" cy="304.5" r="1.9" fill="#161617"/><circle cx="1271" cy="309.5" r="1.9" fill="#161617"/><rect x="1333" y="317.5" width="5.5" height="5" rx="1" fill="#161617"/><rect x="1373.5" y="313" width="3.6" height="4.6" rx="0.8" fill="#161617"/><polygon points="1352.6,140.6 1357.4,141.5 1357.4,310.0 1352.6,310.0" fill="#a96040" stroke="#1a1a1a" stroke-width="0.6"/><polygon points="1352.6,202.5 1357.4,202.5 1357.4,210.4 1352.6,210.4" fill="#b4b6b1"/><polygon points="1352.6,253.4 1357.4,253.4 1357.4,262.5 1352.6,262.5" fill="#b4b6b1"/><path d="M1352.0 310.0 L1352.0 355.0" stroke="#1a1a1a" stroke-width="0.8"/><path d="M1311 207 L1311 216" stroke="#2a2ab0" stroke-width="0.8"/><path d="M1306 216 L1311 216" stroke="#a02020" stroke-width="0.8"/><path d="M1311 216 L1318 216" stroke="#20a020" stroke-width="0.8"/></svg>
<div class="a" style="left:941px;top:37px;width:32px;height:32px;background:#3a3a3a;"></div>
<svg style="left:941px;top:37px" width="32" height="32" viewBox="0 0 32 32"><path d="M4.2 11.5 V4.2 H11.5 M20.5 4.2 H27.8 V11.5 M27.8 20.5 V27.8 H20.5 M11.5 27.8 H4.2 V20.5" fill="none" stroke="#8d8d8d" stroke-width="1.25"/><path d="M16 9 L22 12.5 L22 19.5 L16 23 L10 19.5 L10 12.5 Z" fill="#8d8d8d"/></svg>
<svg style="left:940px;top:240px" width="110" height="110" viewBox="0 0 110 110"><circle cx="50.799999999999955" cy="55" r="46.5" fill="#282728"/><path d="M51 52 L51 36" stroke="#18189a" stroke-width="2"/><path d="M48.60000000000002 37 L51 28.5 L53.39999999999998 37 Z" fill="#18189a"/><path d="M54 55 L69 55" stroke="#189a18" stroke-width="2"/><path d="M68 52.39999999999998 L77 55 L68 57.60000000000002 Z" fill="#189a18"/><path d="M47 55 L32 55" stroke="#a01818" stroke-width="1.6"/><path d="M33 55 L37 52.30000000000001 L41 55 L37 57.69999999999999 Z" fill="#a01818"/><circle cx="50.799999999999955" cy="55" r="4.2" fill="#7a7a7a"/><text x="54" y="22" font-family="Liberation Sans, sans-serif" font-size="9.3" stroke-width="0.35" fill="#18189a" stroke="#18189a" text-anchor="middle">Z</text><text x="87" y="55" font-family="Liberation Sans, sans-serif" font-size="9.3" stroke-width="0.35" fill="#189a18" stroke="#189a18" text-anchor="middle">Y</text><text x="29" y="55" font-family="Liberation Sans, sans-serif" font-size="9.3" stroke-width="0.35" fill="#a01818" stroke="#a01818" text-anchor="middle">X</text></svg>
<svg style="left:1675px;top:70px" width="90" height="90" viewBox="0 0 90 90"><path d="M6.7000000000000455 14.299999999999997 L52.799999999999955 7 L52.799999999999955 78.19999999999999 L6.7000000000000455 69 Z" fill="#999"/><path d="M55 7.5 L79.40000000000009 16.799999999999997 L79.40000000000009 67 L55 78 Z" fill="#999"/><text transform="translate(28.5 50.5) scale(0.69 1.82)" text-anchor="middle" font-family="Liberation Sans, sans-serif" font-size="11.5" fill="#555">Справа</text><text transform="translate(68.29999999999995 50.3) skewY(-6) scale(0.37 1.95)" text-anchor="middle" font-family="Liberation Sans, sans-serif" font-size="11.5" fill="#555">Слева</text></svg>
<div class="a" style="left:941px;top:425px;width:846px;height:37px;background:#3d3d3d;border-radius:4px 4px 0 0"></div>
<div class="a" style="left:1364px;top:431px;width:42px;height:2.5px;background:#2c5f73;"></div>
<div class="a" style="left:941px;top:462px;width:846px;height:32px;background:#474747;"></div>
<div class="a" style="left:941px;top:494px;width:846px;height:311px;background:#9a9a9a;"></div>
<div class="a" style="left:941px;top:804px;width:438px;height:8px;background:#2f5f70;"></div>
<div class="a" style="left:1379px;top:804px;width:408px;height:8px;background:#4a4a4a;"></div>
<div class="a" style="left:1377px;top:462px;width:1px;height:32px;background:#3a3a3a;"></div>
<div class="a" style="left:1569px;top:462px;width:1px;height:32px;background:#3a3a3a;"></div>
<div class="th" style="left:1106.3px;top:472px;;transform:scaleX(0.965);transform-origin:0 0">Элемент (Модель A)</div>
<div class="th" style="left:1393.5px;top:472px;;transform:scaleX(0.965);transform-origin:0 0">Элемент (Модель B)</div>
<div class="th" style="left:1585.5px;top:472px;;transform:scaleX(0.954);transform-origin:0 0">GUID элемента (Модель A)</div>
<div class="t" style="left:1610px;top:503px;font-size:14px;color:#666;transform:scaleX(1.022);transform-origin:0 0">Отсутствуют данные</div>
<svg style="left:1615px;top:434px" width="22" height="22" viewBox="0 0 22 22"><rect x="2.6" y="2.6" width="11.4" height="11.4" rx="2.2" fill="none" stroke="#8d8d8d" stroke-width="1.6"/><path d="M8 14 V17.2 Q8 19.4 10.2 19.4 H17.2 Q19.4 19.4 19.4 17.2 V10.2 Q19.4 8 17.2 8 H14" fill="none" stroke="#8d8d8d" stroke-width="1.6"/><path d="M8 11.5 V10.2 Q8 8 10.2 8 H11.5" fill="none" stroke="#8d8d8d" stroke-width="1.6"/></svg>
<svg style="left:1651px;top:436px" width="20" height="20" viewBox="0 0 20 20"><path d="M3 3 H17 M3 18.5 H17" stroke="#8d8d8d" stroke-width="1.8" fill="none"/><path d="M10 7 V15" stroke="#8d8d8d" stroke-width="1.6"/><path d="M6.8 9 L10 5.6 L13.2 9 M6.8 13 L10 16.4 L13.2 13" fill="none" stroke="#8d8d8d" stroke-width="1.6"/></svg>
<svg style="left:1685px;top:436px" width="20" height="20" viewBox="0 0 20 20"><rect x="3" y="8.6" width="14" height="2.8" fill="#8d8d8d"/><path d="M10 1 V6 M10 14 V19" stroke="#8d8d8d" stroke-width="1.6"/><path d="M6.8 3.4 L10 6.8 L13.2 3.4 M6.8 16.6 L10 13.2 L13.2 16.6" fill="none" stroke="#8d8d8d" stroke-width="1.6"/></svg>
<svg style="left:1718.75px;top:435.75px" width="20.5" height="20.5" viewBox="0 0 24 24"><path fill="#8d8d8d" d="M12,15.5A3.5,3.5 0 0,1 8.5,12A3.5,3.5 0 0,1 12,8.5A3.5,3.5 0 0,1 15.5,12A3.5,3.5 0 0,1 12,15.5M19.43,12.97C19.47,12.65 19.5,12.33 19.5,12C19.5,11.67 19.47,11.34 19.43,11L21.54,9.37C21.73,9.22 21.78,8.95 21.66,8.73L19.66,5.27C19.54,5.05 19.27,4.96 19.05,5.05L16.56,6.05C16.04,5.66 15.5,5.32 14.87,5.07L14.5,2.42C14.46,2.18 14.25,2 14,2H10C9.75,2 9.54,2.18 9.5,2.42L9.13,5.07C8.5,5.32 7.96,5.66 7.44,6.05L4.95,5.05C4.73,4.96 4.46,5.05 4.34,5.27L2.34,8.73C2.21,8.95 2.27,9.22 2.46,9.37L4.57,11C4.53,11.34 4.5,11.67 4.5,12C4.5,12.33 4.53,12.65 4.57,12.97L2.46,14.63C2.27,14.78 2.21,15.05 2.34,15.27L4.34,18.73C4.46,18.95 4.73,19.03 4.95,18.95L7.44,17.94C7.96,18.34 8.5,18.68 9.13,18.93L9.5,21.58C9.54,21.82 9.75,22 10,22H14C14.25,22 14.46,21.82 14.5,21.58L14.87,18.93C15.5,18.67 16.04,18.34 16.56,17.94L19.05,18.95C19.27,19.03 19.54,18.95 19.66,18.73L21.66,15.27C21.78,15.05 21.73,14.78 21.54,14.63L19.43,12.97Z"/></svg>
<svg style="left:1752.9px;top:436.6px" width="20" height="20" viewBox="0 0 24 24"><path fill="#8d8d8d" d="M7.41,8.58L12,13.17L16.59,8.58L18,10L12,16L6,10L7.41,8.58Z"/></svg>
<div class="a" style="left:1795px;top:37px;width:36px;height:773px;background:#3d3d3d;"></div>
<svg style="left:1795px;top:37px" width="36" height="773" viewBox="0 0 36 773"><rect x="0" y="91.5" width="36" height="1" fill="#333"/><rect x="0" y="361.0" width="36" height="1" fill="#333"/><rect x="0" y="410.0" width="36" height="1" fill="#333"/><rect x="0" y="591.0" width="36" height="1" fill="#333"/><rect x="0" y="684.0" width="36" height="1" fill="#333"/><path d="M15.0,31.0 L11.0,31.0 C5.5,31.0 5.5,23.0 10.5,22.5 C10.5,15.0 20.0,12.5 23.0,18.0 C29.0,17.0 31.5,24.0 27.0,27.0 C26.0,30.0 24.0,31.0 21.5,31.0" fill="none" stroke="#8d8d8d" stroke-width="1.4" stroke-linecap="round" stroke-linejoin="round" /><path d="M18.4,35.0 L18.4,19.5 M18.4,25.0 L14.5,21.5 M18.4,28.0 L22.5,24.0" fill="none" stroke="#8d8d8d" stroke-width="1.3" stroke-linecap="round" stroke-linejoin="round" /><path d="M15.0,72.0 L6.0,72.0 L6.0,55.5 L28.5,55.5 L28.5,61.0" fill="none" stroke="#8d8d8d" stroke-width="1.3" stroke-linecap="round" stroke-linejoin="round" stroke-linejoin="miter"/><path d="M16.0,68.5 L16.0,64.5 L20.0,64.5 M26.5,64.5 L30.5,64.5 L30.5,68.5 M30.5,75.0 L30.5,79.0 L26.5,79.0 M20.0,79.0 L16.0,79.0 L16.0,75.0" fill="none" stroke="#8d8d8d" stroke-width="1.2" stroke-linecap="round" stroke-linejoin="round" stroke-linejoin="miter"/><path d="M23.3,67.0 L27.3,69.3 L27.3,74.0 L23.3,76.3 L19.3,74.0 L19.3,69.3 Z" fill="#8d8d8d"/><path d="M5.4,112.3 h25 v7.6 h-25 Z" fill="none" stroke="#8d8d8d" stroke-width="1.3" stroke-linecap="round" stroke-linejoin="round" stroke-linejoin="miter"/><rect x="4.7000000000000455" y="122.30000000000001" width="26.4" height="1.8" fill="#8d8d8d"/><rect x="8.5" y="115.9" width="1.1" height="4" fill="#8d8d8d"/><rect x="11.5" y="117.70000000000002" width="1.1" height="2.2" fill="#8d8d8d"/><rect x="14.5" y="115.9" width="1.1" height="4" fill="#8d8d8d"/><rect x="17.5" y="117.70000000000002" width="1.1" height="2.2" fill="#8d8d8d"/><rect x="20.5" y="115.9" width="1.1" height="4" fill="#8d8d8d"/><rect x="23.5" y="117.70000000000002" width="1.1" height="2.2" fill="#8d8d8d"/><rect x="26.5" y="115.9" width="1.1" height="4" fill="#8d8d8d"/><path d="M13.0,159.0 L22.5,147.0 L22.5,163.5 L13.0,175.0 Z" fill="#8d8d8d"/><path d="M5.5,163.5 L14.0,157.8 L30.5,157.8 L22.0,163.5 Z" fill="none" stroke="#8d8d8d" stroke-width="1.2" stroke-linecap="round" stroke-linejoin="round" stroke-linejoin="miter"/><path d="M15.5,199.0 L20.0,194.5 L20.0,211.5 L15.5,216.0 Z" fill="#8d8d8d"/><path d="M6.8,199.0 h17.5 v17 h-17.5 Z M12.0,194.6 h17.5 v17 h-17.5 Z M6.8,199.0 L12.0,194.6 M24.3,199.0 L29.5,194.6 M6.8,216.0 L12.0,211.6 M24.3,216.0 L29.5,211.6" fill="none" stroke="#8d8d8d" stroke-width="1.0" stroke-linecap="round" stroke-linejoin="round" stroke-linejoin="miter"/><path d="M7.5,239.0 L30.5,239.0 L30.5,258.5 L5.0,258.5 L5.0,241.5 Z" fill="none" stroke="#8d8d8d" stroke-width="1.5" stroke-linecap="round" stroke-linejoin="round" stroke-linejoin="miter"/><path d="M5.0,248.0 L30.5,248.0 M17.5,239.0 L17.5,255.0" stroke="#8d8d8d" stroke-width="1" stroke-dasharray="3 1.4" fill="none"/><path d="M23.0,258.0 L23.0,254.5 L30.0,254.5" fill="none" stroke="#8d8d8d" stroke-width="1.1" stroke-linecap="round" stroke-linejoin="round" stroke-linejoin="miter"/><rect x="31" y="240" width="1.2" height="19.5" fill="#8d8d8d"/><g transform="translate(6.2000000000000455 281.3) scale(0.958)"><path d="M12,8A4,4 0 0,1 16,12A4,4 0 0,1 12,16A4,4 0 0,1 8,12A4,4 0 0,1 12,8M3.05,13H1V11H3.05C3.5,6.83 6.83,3.5 11,3.05V1H13V3.05C17.17,3.5 20.5,6.83 20.95,11H23V13H20.95C20.5,17.17 17.17,20.5 13,20.95V23H11V20.95C6.83,20.5 3.5,17.17 3.05,13M12,5A7,7 0 0,0 5,12A7,7 0 0,0 12,19A7,7 0 0,0 19,12A7,7 0 0,0 12,5Z" fill="#8d8d8d"/></g><circle cx="18" cy="337" r="12.6" fill="none" stroke="#8d8d8d" stroke-width="1.2"/><path d="M12.5,344.5 L12.5,330.5 Q16.0,329.0 18.5,330.8 Q21.5,332.8 25.0,331.0 L25.0,338.5 Q21.5,340.2 18.5,338.3 Q16.0,336.6 12.5,338.0" fill="none" stroke="#8d8d8d" stroke-width="1.3" stroke-linecap="round" stroke-linejoin="round" stroke-linejoin="miter"/><path d="M4.0,382.0 L24.0,394.5 M11.0,376.5 L32.5,389.0 M4.0,399.5 L32.5,373.0 M17.0,399.0 L33.0,385.0" stroke="#8d8d8d" stroke-width="1" fill="none"/><text x="3" y="382.5" font-family="Liberation Sans, sans-serif" font-size="6.5" fill="#8d8d8d">1</text><text x="13" y="376" font-family="Liberation Sans, sans-serif" font-size="6.5" fill="#8d8d8d">2</text><rect x="6.599999999999909" y="423.4" width="23.2" height="23.2" fill="none" stroke="#8d8d8d" stroke-width="1" stroke-dasharray="1.6 1.6"/><rect x="6.599999999999909" y="467.4" width="23.2" height="23.2" fill="none" stroke="#8d8d8d" stroke-width="1" stroke-dasharray="1.6 1.6"/><rect x="6.599999999999909" y="511.4" width="23.2" height="23.2" fill="none" stroke="#8d8d8d" stroke-width="1" stroke-dasharray="1.6 1.6"/><rect x="6.599999999999909" y="555.4" width="23.2" height="23.2" fill="none" stroke="#8d8d8d" stroke-width="1" stroke-dasharray="1.6 1.6"/><g transform="translate(11.600000000000046 428.4) scale(0.55)"><path d="M21,16.5C21,16.88 20.79,17.21 20.47,17.38L12.57,21.82C12.41,21.94 12.21,22 12,22C11.79,22 11.59,21.94 11.43,21.82L3.53,17.38C3.21,17.21 3,16.88 3,16.5V7.5C3,7.12 3.21,6.79 3.53,6.62L11.43,2.18C11.59,2.06 11.79,2 12,2C12.21,2 12.41,2.06 12.57,2.18L20.47,6.62C20.79,6.79 21,7.12 21,7.5V16.5M12,4.15L6.04,7.5L12,10.85L17.96,7.5L12,4.15M5,15.91L11,19.29V12.58L5,9.21V15.91M19,15.91V9.21L13,12.58V19.29L19,15.91Z" fill="#8d8d8d"/></g><g transform="translate(10.200000000000045 471) scale(0.667)"><path d="M12,9A3,3 0 0,0 9,12A3,3 0 0,0 12,15A3,3 0 0,0 15,12A3,3 0 0,0 12,9M12,17A5,5 0 0,1 7,12A5,5 0 0,1 12,7A5,5 0 0,1 17,12A5,5 0 0,1 12,17M12,4.5C7,4.5 2.73,7.61 1,12C2.73,16.39 7,19.5 12,19.5C17,19.5 21.27,16.39 23,12C21.27,7.61 17,4.5 12,4.5Z" fill="#8d8d8d"/></g><g transform="translate(10.200000000000045 515) scale(0.667)"><path d="M11.83,9L15,12.16C15,12.11 15,12.05 15,12A3,3 0 0,0 12,9C11.94,9 11.89,9 11.83,9M7.53,9.8L9.08,11.35C9.03,11.56 9,11.77 9,12A3,3 0 0,0 12,15C12.22,15 12.44,14.97 12.65,14.92L14.2,16.47C13.53,16.8 12.79,17 12,17A5,5 0 0,1 7,12C7,11.21 7.2,10.47 7.53,9.8M2,4.27L4.28,6.55L4.73,7C3.08,8.3 1.78,10 1,12C2.73,16.39 7,19.5 12,19.5C13.55,19.5 15.03,19.2 16.38,18.66L16.81,19.08L19.73,22L21,20.73L3.27,3M12,7A5,5 0 0,1 17,12C17,12.64 16.87,13.26 16.64,13.82L19.57,16.75C21.07,15.5 22.27,13.86 23,12C21.27,7.61 17,4.5 12,4.5C10.6,4.5 9.26,4.75 8,5.2L10.17,7.35C10.74,7.13 11.35,7 12,7Z" fill="#8d8d8d"/></g><rect x="16" y="565" width="16" height="16" fill="#999"/><path d="M19.5,568.5 L28.5,577.5 M28.5,568.5 L19.5,577.5" stroke="#3a3a3a" stroke-width="1.2"/><rect x="2" y="600" width="32" height="32" fill="#565656"/><rect x="2" y="644" width="32" height="32" fill="#565656"/><path d="M7.5,608.0 L18.0,604.5 L29.0,608.0 L29.0,623.0 L18.5,628.5 L8.5,622.0 Z" fill="#8a8a8a"/><path d="M9.2,609.2 L18.0,606.3 L27.0,609.0 L18.5,612.2 Z" fill="#5e5e5e"/><path d="M18.5,612.5 L18.5,627.5" stroke="#565656" stroke-width="0.9"/><path d="M19.3,613.0 L28.2,609.8 L28.2,622.6 L19.3,627.2 Z" fill="#7b7b7b"/><ellipse cx="18" cy="660.5" rx="11" ry="6" fill="none" stroke="#8d8d8d" stroke-width="1.5"/><ellipse cx="18" cy="660.5" rx="5.6" ry="10.4" fill="none" stroke="#8d8d8d" stroke-width="1.5"/><path d="M18.0,657.0 L18.0,661.5 L14.8,664.5 M18.0,661.5 L21.2,664.5" stroke="#b0b0b0" stroke-width="0.9" fill="none"/><path d="M2.2,767.0 L6.5,771.3 L2.2,771.3 Z" fill="#9a9a9a"/></svg>
<div class="a" style="left:664px;top:319px;width:500px;height:176px;background:#fff;box-shadow:0 11px 15px -7px rgba(0,0,0,.2),0 24px 38px 3px rgba(0,0,0,.14),0 9px 46px 8px rgba(0,0,0,.12)"></div>
<div class="a" style="left:664px;top:319px;width:500px;height:43.5px;background:#545454;"></div>
<div class="t" style="left:671px;top:334px;font-size:14.5px;color:#fff">Import Excel</div>
<svg style="left:1133.5px;top:329px" width="24" height="24" viewBox="0 0 24 24"><path fill="#fff" d="M19,6.41L17.59,5L12,10.59L6.41,5L5,6.41L10.59,12L5,17.59L6.41,19L12,13.41L17.59,19L19,17.59L13.41,12L19,6.41Z"/></svg>
<div class="a" style="left:680px;top:382px;width:468px;height:40px;border:2px solid #2d8bab;border-radius:4px"></div>
<div class="a" style="left:689.5px;top:380px;width:76.7px;height:6px;background:#fff;"></div>
<div class="t" style="left:692.5px;top:378.5px;font-size:9.5px;color:#2d8bab;transform:scaleX(1.015);transform-origin:0 0">Выберите файл</div>
<svg style="left:692px;top:389.5px" width="24" height="24" viewBox="0 0 24 24"><path fill="#2d8bab" d="M16.5,6V17.5A4,4 0 0,1 12.5,21.5A4,4 0 0,1 8.5,17.5V5A2.5,2.5 0 0,1 11,2.5A2.5,2.5 0 0,1 13.5,5V15.5A1,1 0 0,1 12.5,16.5A1,1 0 0,1 11.5,15.5V6H10V15.5A2.5,2.5 0 0,0 12.5,18A2.5,2.5 0 0,0 15,15.5V5A4,4 0 0,0 11,1A4,4 0 0,0 7,5V17.5A5.5,5.5 0 0,0 12.5,23A5.5,5.5 0 0,0 18,17.5V6H16.5Z"/></svg>
<div class="a" style="left:724px;top:390px;width:146px;height:24px;border-radius:12px;background:#e0e0e0"></div>
<div class="t" style="left:735.8px;top:396px;font-size:12.3px;color:#222">attrImport.xlsx (5.8 kB)</div>
<svg style="left:1111.5px;top:390px" width="24" height="24" viewBox="0 0 24 24"><path fill="#2d8bab" d="M19,6.41L17.59,5L12,10.59L6.41,5L5,6.41L10.59,12L5,17.59L6.41,19L12,13.41L17.59,19L19,17.59L13.41,12L19,6.41Z"/></svg>
<div class="a" style="left:1072px;top:448px;width:76px;height:28px;border-radius:4px;background:#3a8fae"></div>
<div class="t" style="left:1085px;top:456px;font-size:12.5px;letter-spacing:1.05px;color:#fff;-webkit-text-stroke:0.12px #fff">Импорт</div>
</div>
</body></html>
